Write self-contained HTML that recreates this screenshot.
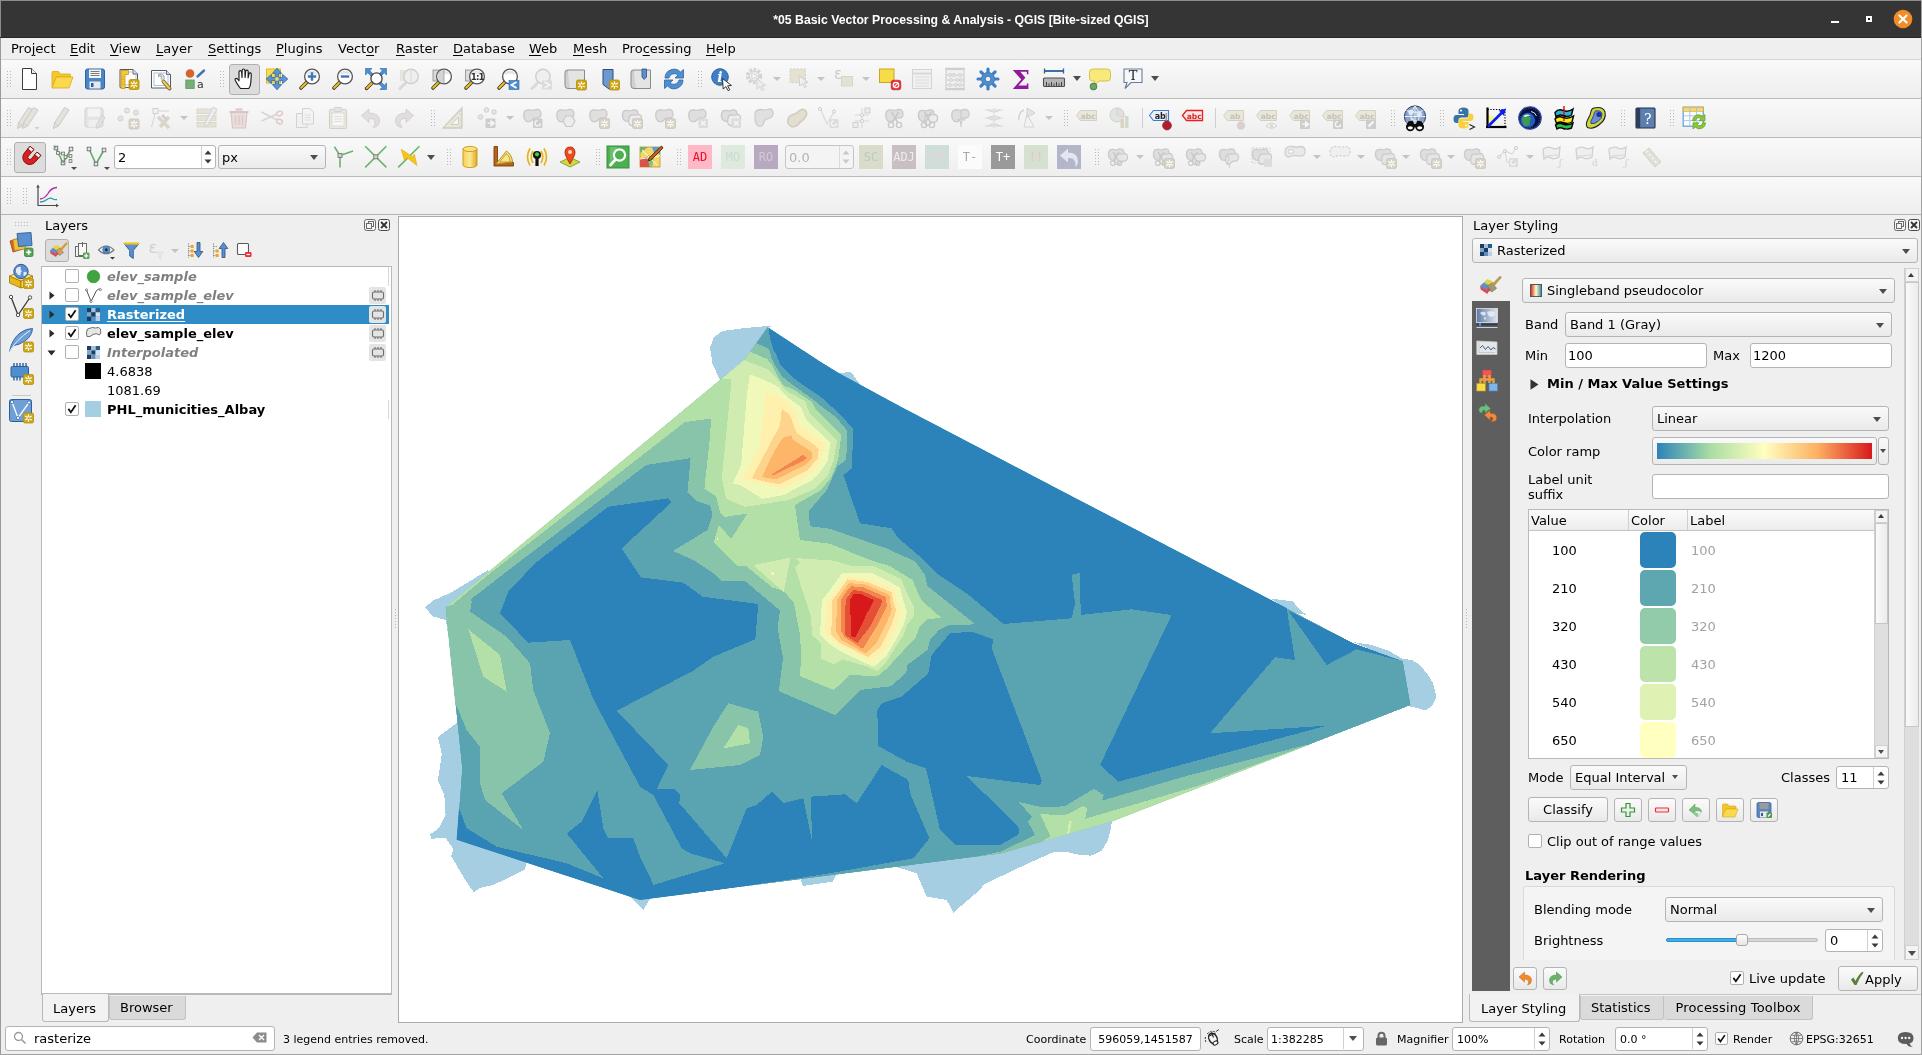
<!DOCTYPE html>
<html lang="en"><head><meta charset="utf-8"><title>QGIS</title><style>
*{box-sizing:border-box}
html,body{margin:0;padding:0}
body{width:1922px;height:1055px;overflow:hidden;background:#efefef;font-family:"DejaVu Sans","Liberation Sans",sans-serif;font-size:13px;color:#000;position:relative}
.a{position:absolute}
.t{position:absolute;white-space:nowrap;line-height:16px}
.tb{position:absolute;left:1px;width:1920px;background:linear-gradient(#f9f9f9,#eeeeee);border-bottom:1px solid #bababa}
.h{position:absolute;width:5px;background-image:radial-gradient(circle,#b8b8b8 0.7px,transparent 0.9px);background-size:3px 3px}
.in{position:absolute;background:#fff;border:1px solid #b4b4b4;border-radius:3px}
.cb{position:absolute;background:linear-gradient(#fafafa,#eaeaea);border:1px solid #b4b4b4;border-radius:3px}
.btn{position:absolute;background:linear-gradient(#fbfbfb,#e9e9e9);border:1px solid #b4b4b4;border-radius:3px}
.pressed{position:absolute;background:#dcdcdc;border:1px solid #b0b0b0;border-radius:3px}
.arr{position:absolute;width:0;height:0;border-left:4px solid transparent;border-right:4px solid transparent;border-top:5px solid #4d4d4d}
.arrd{position:absolute;width:0;height:0;border-left:4px solid transparent;border-right:4px solid transparent;border-top:4px solid #c4c4c4}
.up{position:absolute;width:0;height:0;border-left:4px solid transparent;border-right:4px solid transparent;border-bottom:5px solid #3a3a3a}
.chk{position:absolute;width:15px;height:15px;background:#fff;border:1px solid #b0b0b0;border-radius:2px}
svg{position:absolute;overflow:visible}
u{text-decoration-thickness:1px;text-underline-offset:2px}
</style></head><body><div id="root" style="position:absolute;left:0;top:0;width:1922px;height:1055px;will-change:transform">
<div class="a" style="left:0px;top:0px;width:1922px;height:38px;background:#353535;border-top:1px solid #8c8c8c;border-left:1px solid #8c8c8c"></div>
<div class="t" style="left:0px;top:11.5px;width:1922px;text-align:center;color:#fff;font-weight:bold;font-family:'Liberation Sans','DejaVu Sans',sans-serif;font-size:13.4px;transform:scaleX(0.915);transform-origin:961px 0">*05 Basic Vector Processing &amp; Analysis - QGIS [Bite-sized QGIS]</div>
<div class="a" style="left:1831px;top:20.6px;width:8.4px;height:2.5px;background:#fff"></div>
<div class="a" style="left:1865.6px;top:15.6px;width:6.8px;height:6.8px;border:2.4px solid #fff;background:#1a1a1a"></div>
<svg class="a" style="left:1893px;top:9px" width="20" height="20" viewBox="0 0 20 20"><circle cx="10" cy="10" r="9.3" fill="#f28c28"/><path d="M6.4 6.4 L13.6 13.6 M13.6 6.4 L6.4 13.6" stroke="#fff" stroke-width="2.1" stroke-linecap="round"/></svg>
<div class="a" style="left:0px;top:38px;width:1px;height:1017px;background:#9a9a9a"></div>
<div class="a" style="left:0px;top:37px;width:1922px;height:1px;background:#262626"></div>
<div class="a" style="left:1px;top:38px;width:1921px;height:22px;background:#efefef;border-bottom:1px solid #d6d6d6"></div>
<div class="t" style="left:11px;top:41px;font-size:13px">Pro<u>j</u>ect</div>
<div class="t" style="left:70px;top:41px;font-size:13px"><u>E</u>dit</div>
<div class="t" style="left:110px;top:41px;font-size:13px"><u>V</u>iew</div>
<div class="t" style="left:156px;top:41px;font-size:13px"><u>L</u>ayer</div>
<div class="t" style="left:208px;top:41px;font-size:13px"><u>S</u>ettings</div>
<div class="t" style="left:276px;top:41px;font-size:13px"><u>P</u>lugins</div>
<div class="t" style="left:338px;top:41px;font-size:13px">Vect<u>o</u>r</div>
<div class="t" style="left:396px;top:41px;font-size:13px"><u>R</u>aster</div>
<div class="t" style="left:453px;top:41px;font-size:13px"><u>D</u>atabase</div>
<div class="t" style="left:529px;top:41px;font-size:13px"><u>W</u>eb</div>
<div class="t" style="left:573px;top:41px;font-size:13px"><u>M</u>esh</div>
<div class="t" style="left:622px;top:41px;font-size:13px">Pro<u>c</u>essing</div>
<div class="t" style="left:706px;top:41px;font-size:13px"><u>H</u>elp</div>
<div class="tb" style="top:60px;height:39px"></div>
<div class="tb" style="top:99px;height:39px"></div>
<div class="tb" style="top:138px;height:39px"></div>
<div class="tb" style="top:177px;height:38px;border-bottom:1px solid #b4b4b4"></div>
<div class="h" style="left:6px;top:70px;height:17px"></div>
<svg style="left:17px;top:67px" width="24" height="24" viewBox="0 0 24 24" ><path d="M5.5 1.5 H14.5 L19.5 6.5 V22.5 H5.5 Z" fill="#fff" stroke="#3c3c3c" stroke-width="1"/><path d="M14.5 1.5 V6.5 H19.5" fill="#eee" stroke="#3c3c3c" stroke-width="1"/></svg>
<svg style="left:50px;top:67px" width="24" height="24" viewBox="0 0 24 24" ><path d="M2 20 V5.5 Q2 4.5 3 4.5 H8.5 L10.5 7 H19.5 Q20.5 7 20.5 8 V10 H6.5 L2.2 20.5 Z" fill="#f5c92a" stroke="#d9a91a" stroke-width=".8"/><path d="M6.3 10 H23 L19 21 H2 Z" fill="#fbd94f" stroke="#d9a91a" stroke-width=".8"/></svg>
<svg style="left:83px;top:67px" width="24" height="24" viewBox="0 0 24 24" ><rect x="2.5" y="2" width="19" height="20" rx="2" fill="#4a86c7" stroke="#2f62a0" stroke-width="1"/><rect x="6" y="2.5" width="12" height="8.5" fill="#f4f4f4"/><path d="M7.5 4.5 H16.5 M7.5 6.5 H16.5 M7.5 8.5 H16.5" stroke="#6d6d6d" stroke-width=".9"/><rect x="6.5" y="14.5" width="11" height="7" fill="#e9e9e9"/><rect x="8" y="16" width="2.5" height="4" fill="#2f5d94"/></svg>
<svg style="left:116px;top:67px" width="24" height="24" viewBox="0 0 24 24" ><path d="M4 2.5 H17 L21.5 7 V20.5 H4 Z" fill="#fff" stroke="#5a5a5a" stroke-width="1"/><path d="M17 2.5 V7 H21.5" fill="#eee" stroke="#5a5a5a"/><rect x="8" y="5" width="12" height="13" fill="none" stroke="#9db9e8" stroke-width=".8"/><path d="M5 3.5 H12.5 V7.5 H9 V21.5 H5 Z" fill="#f3c93b" stroke="#c8981a" stroke-width=".8"/><path d="M5.5 10 h2 M5.5 12.5 h2 M5.5 15 h2 M5.5 17.5 h2" stroke="#c8981a" stroke-width=".7"/><rect x="13" y="12.5" width="10" height="10" rx="1.6" fill="#cfa616" stroke="#b38f0a" stroke-width=".8"/><path d="M18 14.3 V20.7 M15.2 15.8 L20.8 19.2 M15.2 19.2 L20.8 15.8" stroke="#fff" stroke-width="1.3" stroke-linecap="round"/><circle cx="18" cy="17.5" r="1" fill="#cfa616"/></svg>
<svg style="left:149px;top:67px" width="24" height="24" viewBox="0 0 24 24" ><path d="M2.5 3.5 H17.5 L21.5 7.5 V21 H2.5 Z" fill="#fff" stroke="#5a5a5a" stroke-width="1"/><path d="M17.5 3.5 V7.5 H21.5" fill="#eee" stroke="#5a5a5a"/><rect x="5" y="6" width="14" height="12.5" fill="none" stroke="#9db9e8" stroke-width=".9"/><path d="M14.5 14.5 L20.5 21.5" stroke="#7a6a2a" stroke-width="4" stroke-linecap="round"/><path d="M14.5 14.5 L20.3 21.2" stroke="#e8c85a" stroke-width="2.4" stroke-linecap="round"/><path d="M9.5 7.5 Q13 6 15 9 Q16 12 14 13.5 L12 11.5 Q13 10 12 9 Q11 8.5 9.5 9.5 Z" fill="#e4e4e4" stroke="#8a8a8a" stroke-width=".8"/></svg>
<svg style="left:183px;top:67px" width="24" height="24" viewBox="0 0 24 24" ><circle cx="7" cy="6.5" r="4.3" fill="#d5622d"/><path d="M14.5 9.5 L21 3.5" stroke="#3f74b5" stroke-width="2.4" stroke-linecap="round"/><rect x="2.8" y="13" width="8.4" height="8.4" fill="#77b077" stroke="#5c985c" stroke-width=".8"/><text x="14" y="21.3" font-size="11" fill="#333" font-family="'DejaVu Sans','Liberation Sans',sans-serif">a</text></svg>
<div class="h" style="left:219px;top:70px;height:17px"></div>
<div class="pressed" style="left:229px;top:64px;width:31px;height:31px;"></div>
<svg style="left:232px;top:67px" width="24" height="24" viewBox="0 0 24 24" ><path d="M8.5 21.5 Q5 17 3.2 13.2 Q2.8 11.5 4.2 11.3 Q5.5 11.3 7 13.8 L7 5 Q7 3.6 8.2 3.6 Q9.4 3.6 9.6 5 L10 10.5 L10.2 3.3 Q10.3 2 11.5 2 Q12.8 2 12.9 3.3 L13.1 10.5 L13.7 4.2 Q13.9 3 15 3.1 Q16.2 3.3 16.2 4.6 L16.1 11 L17 6.8 Q17.3 5.7 18.3 5.9 Q19.4 6.2 19.3 7.5 L18.8 15.5 Q18.6 19 16.8 21.5 Z" fill="#fff" stroke="#1e1e1e" stroke-width="1.15" stroke-linejoin="round"/></svg>
<svg style="left:265.05px;top:67px" width="24" height="24" viewBox="0 0 24 24" ><rect x="1.5" y="2" width="14" height="14" fill="#f6dd4a" stroke="#d4b32a" stroke-width=".9"/><path d="M12 1.2 L16.6 6.4 H13.6 V10.4 H17.6 V7.4 L22.8 12 L17.6 16.6 V13.6 H13.6 V17.6 H16.6 L12 22.8 L7.4 17.6 H10.4 V13.6 H6.4 V16.6 L1.2 12 L6.4 7.4 V10.4 H10.4 V6.4 H7.4 Z" fill="#5b93d3" stroke="#2d65a5" stroke-width=".8"/><rect x="10.4" y="10.4" width="3.2" height="3.2" fill="#f6dd4a"/></svg>
<svg style="left:298.1px;top:67px" width="24" height="24" viewBox="0 0 24 24" ><path d="M9.3 14.7 L3 21" stroke="#3a3a3a" stroke-width="3.6" stroke-linecap="round"/><path d="M8.6 15.4 L3.2 20.8" stroke="#f3c418" stroke-width="2" stroke-linecap="round"/><circle cx="14" cy="9.5" r="7.4" fill="#fff" stroke="#555" stroke-width="1.3"/><path d="M8.3 8 A6 6 0 0 1 19.7 8 Q14 5 8.3 8 Z" fill="#e4e4e4"/><path d="M14 5.3 V13.7 M9.8 9.5 H18.2" stroke="#3f76b8" stroke-width="2.4"/></svg>
<svg style="left:331.15px;top:67px" width="24" height="24" viewBox="0 0 24 24" ><path d="M9.3 14.7 L3 21" stroke="#3a3a3a" stroke-width="3.6" stroke-linecap="round"/><path d="M8.6 15.4 L3.2 20.8" stroke="#f3c418" stroke-width="2" stroke-linecap="round"/><circle cx="14" cy="9.5" r="7.4" fill="#fff" stroke="#555" stroke-width="1.3"/><path d="M8.3 8 A6 6 0 0 1 19.7 8 Q14 5 8.3 8 Z" fill="#e4e4e4"/><path d="M9.8 9.5 H18.2" stroke="#3f76b8" stroke-width="2.4"/></svg>
<svg style="left:364.2px;top:67px" width="24" height="24" viewBox="0 0 24 24" ><path d="M1.5 1.5 H8 L5.8 3.7 L9 7 L7 9 L3.7 5.8 L1.5 8 Z M22.5 1.5 V8 L20.3 5.8 L17 9 L15 7 L18.2 3.7 L16 1.5 Z M22.5 22.5 H16 L18.2 20.3 L15 17 L17 15 L20.3 18.2 L22.5 16 Z" fill="#4f8fd0" stroke="#2d65a5" stroke-width=".6"/><path d="M8.5 15.5 L2.5 21.5" stroke="#3a3a3a" stroke-width="3.4" stroke-linecap="round"/><path d="M8 16 L2.8 21.2" stroke="#f3c418" stroke-width="1.9" stroke-linecap="round"/><circle cx="12.5" cy="11.5" r="5.6" fill="#fff" fill-opacity=".85" stroke="#4c4c4c" stroke-width="1.4"/></svg>
<svg style="left:397.25px;top:67px" width="24" height="24" viewBox="0 0 24 24" ><rect x="3" y="3" width="12" height="11" fill="#e6e4dc"/><path d="M9 15.5 L3 21.5" stroke="#d9d9d9" stroke-width="3" stroke-linecap="round"/><circle cx="14" cy="9.5" r="7.2" fill="#efefef" stroke="#cfcfcf" stroke-width="1.4"/><path d="M14 3 V16" stroke="#d8d8d8" stroke-width="1"/></svg>
<svg style="left:430.3px;top:67px" width="24" height="24" viewBox="0 0 24 24" ><rect x="3" y="3" width="12" height="11" fill="#d9d9d9" stroke="#8a8a8a" stroke-width=".8"/><path d="M9.3 14.7 L3 21" stroke="#3a3a3a" stroke-width="3.6" stroke-linecap="round"/><path d="M8.6 15.4 L3.2 20.8" stroke="#f3c418" stroke-width="2" stroke-linecap="round"/><circle cx="14" cy="9.5" r="7.4" fill="#fff" stroke="#555" stroke-width="1.3"/><path d="M8.3 8 A6 6 0 0 1 19.7 8 Q14 5 8.3 8 Z" fill="#e4e4e4"/><path d="M14 2.8 A6.7 6.7 0 0 0 14 16.2 Z" fill="#d4d4d4"/><path d="M14 2.8 V16.2" stroke="#9a9a9a" stroke-width=".8"/></svg>
<svg style="left:463.35px;top:67px" width="24" height="24" viewBox="0 0 24 24" ><rect x="2.5" y="3" width="12" height="11" fill="#dcdcdc" stroke="#8a8a8a" stroke-width=".8"/><path d="M9.3 14.7 L3 21" stroke="#3a3a3a" stroke-width="3.6" stroke-linecap="round"/><path d="M8.6 15.4 L3.2 20.8" stroke="#f3c418" stroke-width="2" stroke-linecap="round"/><circle cx="14" cy="9.5" r="7.4" fill="#fff" stroke="#555" stroke-width="1.3"/><path d="M8.3 8 A6 6 0 0 1 19.7 8 Q14 5 8.3 8 Z" fill="#e4e4e4"/><text x="14.2" y="13.2" font-size="8.8" font-weight="bold" text-anchor="middle" fill="#333" letter-spacing="-.9" font-family="'DejaVu Sans','Liberation Sans',sans-serif">1:1</text></svg>
<svg style="left:496.4px;top:67px" width="24" height="24" viewBox="0 0 24 24" ><path d="M9.3 14.7 L3 21" stroke="#3a3a3a" stroke-width="3.6" stroke-linecap="round"/><path d="M8.6 15.4 L3.2 20.8" stroke="#f3c418" stroke-width="2" stroke-linecap="round"/><circle cx="14" cy="9.5" r="7.4" fill="#fff" stroke="#555" stroke-width="1.3"/><path d="M8.3 8 A6 6 0 0 1 19.7 8 Q14 5 8.3 8 Z" fill="#e4e4e4"/><rect x="13" y="13.5" width="10" height="9" fill="#4f8fd0" stroke="#2d65a5" stroke-width=".6"/><path d="M20.5 15 L15.5 18 L20.5 21" fill="none" stroke="#fff" stroke-width="1.8"/></svg>
<svg style="left:529.45px;top:67px" width="24" height="24" viewBox="0 0 24 24" ><path d="M9 15.5 L3 21.5" stroke="#d9d9d9" stroke-width="3" stroke-linecap="round"/><circle cx="14" cy="9.5" r="7.2" fill="#efefef" stroke="#cfcfcf" stroke-width="1.4"/><rect x="13" y="13.5" width="10" height="9" fill="#dcdcdc"/><path d="M15.5 15 L20.5 18 L15.5 21" fill="none" stroke="#f4f4f4" stroke-width="1.8"/></svg>
<svg style="left:562.5px;top:67px" width="24" height="24" viewBox="0 0 24 24" ><path d="M4.5 3 H21.5 V21.5 H7 Q4.5 21.5 4.5 19 Z" fill="#e4e4e4" stroke="#8a8a8a" stroke-width="1"/><path d="M4.5 3 Q2 3 2 5.5 V18.5 Q2 21.5 5 21.5 H7" fill="#d0d0d0" stroke="#8a8a8a" stroke-width="1"/><rect x="13.5" y="13" width="10" height="10" rx="1.6" fill="#cfa616" stroke="#b38f0a" stroke-width=".8"/><path d="M18.5 14.8 V21.2 M15.7 16.3 L21.3 19.7 M15.7 19.7 L21.3 16.3" stroke="#fff" stroke-width="1.3" stroke-linecap="round"/><circle cx="18.5" cy="18" r="1" fill="#cfa616"/></svg>
<svg style="left:595.55px;top:67px" width="24" height="24" viewBox="0 0 24 24" ><path d="M7 2.5 H17 V22 H13 L7 17.5 Z" fill="#6a9ad0" stroke="#2d4f7a" stroke-width="1"/><rect x="13.5" y="13" width="10" height="10" rx="1.6" fill="#cfa616" stroke="#b38f0a" stroke-width=".8"/><path d="M18.5 14.8 V21.2 M15.7 16.3 L21.3 19.7 M15.7 19.7 L21.3 16.3" stroke="#fff" stroke-width="1.3" stroke-linecap="round"/><circle cx="18.5" cy="18" r="1" fill="#cfa616"/></svg>
<svg style="left:628.6px;top:67px" width="24" height="24" viewBox="0 0 24 24" ><path d="M4.5 3 H21.5 V21.5 H7 Q4.5 21.5 4.5 19 Z" fill="#e4e4e4" stroke="#8a8a8a" stroke-width="1"/><path d="M4.5 3 Q2 3 2 5.5 V18.5 Q2 21.5 5 21.5 H7" fill="#d0d0d0" stroke="#8a8a8a" stroke-width="1"/><path d="M13 2 H17.5 V10 L15.2 12.5 L13 10 Z" fill="#5b8fd0" stroke="#2d4f7a" stroke-width=".8"/></svg>
<svg style="left:661.65px;top:67px" width="24" height="24" viewBox="0 0 24 24" ><path d="M3 11 A9 9 0 0 1 18.5 5 L21.5 2.5 V11 H13 L16 8 A5.6 5.6 0 0 0 7 11 Z" fill="#4f8fd0" stroke="#2d65a5" stroke-width=".8"/><path d="M21 13 A9 9 0 0 1 5.5 19 L2.5 21.5 V13 H11 L8 16 A5.6 5.6 0 0 0 17 13 Z" fill="#4f8fd0" stroke="#2d65a5" stroke-width=".8"/></svg>
<div class="h" style="left:697px;top:70px;height:17px"></div>
<svg style="left:710px;top:67px" width="24" height="24" viewBox="0 0 24 24" ><circle cx="10" cy="10" r="8.3" fill="#3f7fc6" stroke="#2b62a3" stroke-width="1"/><text x="10" y="15" font-size="14" font-weight="bold" font-style="italic" text-anchor="middle" fill="#fff" font-family="'DejaVu Serif','Liberation Serif',serif">i</text><path d="M12.5 11.5 L21.5 18.5 L17.6 18.8 L19.8 22.8 L18 23.6 L15.9 19.6 L13.2 22 Z" fill="#fff" stroke="#222" stroke-width=".9" stroke-linejoin="round"/></svg>
<svg style="left:744px;top:67px" width="24" height="24" viewBox="0 0 24 24" ><circle cx="10" cy="9" r="6.5" fill="none" stroke="#d4d4d4" stroke-width="3.4" stroke-dasharray="2.6 1.6"/><circle cx="10" cy="9" r="5" fill="#ebebeb" stroke="#d0d0d0" stroke-width="1"/><path d="M8 6 L13 9 L8 12 Z" fill="#f8f8f8" stroke="#d0d0d0" stroke-width=".7"/><path d="M12.5 11.5 L21.5 18.5 L17.6 18.8 L19.8 22.8 L18 23.6 L15.9 19.6 L13.2 22 Z" fill="#ededed" stroke="#cfcfcf" stroke-width=".9"/></svg>
<div class="arrd" style="left:773px;top:77px"></div>
<svg style="left:788px;top:67px" width="24" height="24" viewBox="0 0 24 24" ><rect x="2" y="2" width="15.5" height="13.5" fill="#e6e2d2" stroke="#cfcfcf" stroke-width="1" stroke-dasharray="2 1.4"/><path d="M11 8.5 L20 15.5 L16.1 15.8 L18.3 19.8 L16.5 20.6 L14.4 16.6 L11.7 19 Z" fill="#f0f0f0" stroke="#cbcbcb" stroke-width=".9"/></svg>
<div class="arrd" style="left:817px;top:77px"></div>
<svg style="left:833px;top:67px" width="24" height="24" viewBox="0 0 24 24" ><text x="1" y="11.5" font-size="15" fill="#cdcdcd" font-family="'DejaVu Sans','Liberation Sans',sans-serif">ε</text><rect x="8.5" y="9.5" width="11" height="9.5" fill="#e6e2d2" stroke="#d3d3d3" stroke-width=".9"/></svg>
<div class="arrd" style="left:862px;top:77px"></div>
<svg style="left:878px;top:67px" width="24" height="24" viewBox="0 0 24 24" ><rect x="1.5" y="2" width="14.5" height="13.5" fill="#f6dc48" stroke="#c9a820" stroke-width="1"/><rect x="13.2" y="13.2" width="9.6" height="9.6" rx="2" fill="#e8303a" stroke="#c01420" stroke-width=".6"/><circle cx="18" cy="18" r="2.7" fill="none" stroke="#fff" stroke-width="1.2"/><path d="M16.2 19.8 L19.8 16.2" stroke="#fff" stroke-width="1.2"/></svg>
<svg style="left:910px;top:67px" width="24" height="24" viewBox="0 0 24 24" ><rect x="2.5" y="2.5" width="19" height="19" fill="#f1f1f1" stroke="#d4d4d4" stroke-width="1"/><path d="M2.5 6.5 H21.5" stroke="#d4d4d4" stroke-width="1.6"/><path d="M5 10 H19 M5 13 H19 M5 16 H19 M5 19 H19" stroke="#dcdcdc" stroke-width="1"/></svg>
<svg style="left:943px;top:67px" width="24" height="24" viewBox="0 0 24 24" ><rect x="3" y="2.5" width="18" height="19" fill="#f1f1f1" stroke="#cfcfcf" stroke-width="1.2"/><path d="M3 8 H21 M3 13 H21 M3 18 H21" stroke="#cfcfcf" stroke-width="1"/><path d="M2 1.5 H22 M2 22.5 H22" stroke="#cfcfcf" stroke-width="1.4"/><g fill="#e3e3e3" stroke="#cfcfcf" stroke-width=".7"><circle cx="7" cy="8" r="1.7"/><circle cx="11" cy="8" r="1.7"/><circle cx="17" cy="8" r="1.7"/><circle cx="8" cy="13" r="1.7"/><circle cx="14" cy="13" r="1.7"/><circle cx="18" cy="13" r="1.7"/><circle cx="7" cy="18" r="1.7"/><circle cx="13" cy="18" r="1.7"/><circle cx="17" cy="18" r="1.7"/></g></svg>
<svg style="left:976px;top:67px" width="24" height="24" viewBox="0 0 24 24" ><g transform="translate(12 12)"><g stroke="#3f7fc6" stroke-width="3.2" stroke-linecap="round"><path d="M0 -10 V10"/><path d="M0 -10 V10" transform="rotate(45)"/><path d="M0 -10 V10" transform="rotate(90)"/><path d="M0 -10 V10" transform="rotate(135)"/></g><circle r="6.6" fill="#4f8fd0" stroke="#3f7fc6" stroke-width="1"/><circle r="2.8" fill="#f2f2f2" stroke="#2d65a5" stroke-width=".8"/></g></svg>
<svg style="left:1009px;top:67px" width="24" height="24" viewBox="0 0 24 24" ><text x="12" y="21.5" font-size="26" text-anchor="middle" fill="#8f1a9b" font-weight="bold" font-family="'DejaVu Serif','Liberation Serif',serif">Σ</text></svg>
<svg style="left:1042px;top:67px" width="24" height="24" viewBox="0 0 24 24" ><path d="M2.5 4 H21.5" stroke="#2d5f9a" stroke-width="1.8"/><path d="M2.5 1.5 V6.5 M21.5 1.5 V6.5" stroke="#2d5f9a" stroke-width="1.3"/><rect x="1.5" y="11" width="21" height="8.5" rx="1" fill="#b5b5b5" stroke="#4e4e4e" stroke-width="1.1"/><path d="M4.5 15 v4 M7 16.5 v2.5 M9.5 15 v4 M12 16.5 v2.5 M14.5 15 v4 M17 16.5 v2.5 M19.5 15 v4" stroke="#333" stroke-width=".9"/></svg>
<div class="arr" style="left:1073px;top:76px"></div>
<svg style="left:1088px;top:67px" width="24" height="24" viewBox="0 0 24 24" ><path d="M4.5 2 H19 Q22.5 2 22.5 5.5 V10.5 Q22.5 14 19 14 H11 L6 19 L7 14 H4.5 Q1.5 14 1.5 10.5 V5.5 Q1.5 2 4.5 2 Z" fill="#f7ea7a" stroke="#d4c04a" stroke-width="1"/><circle cx="5.5" cy="19.5" r="3.4" fill="#6aa56a" stroke="#3f7d3f" stroke-width=".9"/></svg>
<svg style="left:1121px;top:67px" width="24" height="24" viewBox="0 0 24 24" ><path d="M3 2 H21 V15.5 H10 L4 21.5 L6 15.5 H3 Z" fill="#f4f7fb" stroke="#6b7d95" stroke-width="1.1"/><text x="12" y="13" font-size="13" text-anchor="middle" fill="#222" font-family="'DejaVu Serif','Liberation Serif',serif">T</text></svg>
<div class="arr" style="left:1151px;top:76px"></div>
<div class="h" style="left:6px;top:109px;height:17px"></div>
<svg style="left:17px;top:106px" width="24" height="24" viewBox="0 0 24 24" ><g transform="translate(-3 0)"><path d="M14.5 1.5 L19 4 L8.5 20 L3.5 22.5 L4.5 17 Z" fill="#e4e2da" stroke="#c9c9c9" stroke-width="1"/><path d="M4.5 17 L8.5 20" stroke="#c9c9c9" stroke-width=".8"/></g><g transform="translate(2 0)"><path d="M14.5 1.5 L19 4 L8.5 20 L3.5 22.5 L4.5 17 Z" fill="#e4e2da" stroke="#c9c9c9" stroke-width="1"/><path d="M4.5 17 L8.5 20" stroke="#c9c9c9" stroke-width=".8"/></g><path d="M17.5 21 h5 l-2.5 2.6 z" fill="#cfcfcf"/></svg>
<svg style="left:50px;top:106px" width="24" height="24" viewBox="0 0 24 24" ><g transform="translate(0 0)"><path d="M14.5 1.5 L19 4 L8.5 20 L3.5 22.5 L4.5 17 Z" fill="#e4e2da" stroke="#c9c9c9" stroke-width="1"/><path d="M4.5 17 L8.5 20" stroke="#c9c9c9" stroke-width=".8"/></g></svg>
<svg style="left:83px;top:106px" width="24" height="24" viewBox="0 0 24 24" ><rect x="2" y="2" width="18" height="19" rx="2" fill="#e4e4e4" stroke="#d0d0d0" stroke-width="1"/><rect x="5" y="2.5" width="12" height="8" fill="#f3f3f3"/><rect x="5.5" y="14" width="11" height="7" fill="#efefef"/><path d="M19 9.5 L22 11.5 L16 21 L13 22.5 L13.5 19 Z" fill="#e4e2da" stroke="#cfcfcf" stroke-width=".9"/></svg>
<svg style="left:116px;top:106px" width="24" height="24" viewBox="0 0 24 24" ><circle cx="4.5" cy="12.5" r="2.5" fill="#e5e5e5" stroke="#d0d0d0"/><circle cx="11" cy="4.5" r="2.5" fill="#e5e5e5" stroke="#d0d0d0"/><circle cx="20" cy="6.5" r="2.5" fill="#e5e5e5" stroke="#d0d0d0"/><rect x="13" y="13" width="10" height="10" rx="1.6" fill="#d6d2c6" stroke="#cbc7bb" stroke-width=".8"/><path d="M18 14.8 V21.2 M15.2 16.3 L20.8 19.7 M15.2 19.7 L20.8 16.3" stroke="#fff" stroke-width="1.3" stroke-linecap="round"/><circle cx="18" cy="18" r="1" fill="#d6d2c6"/></svg>
<svg style="left:149px;top:106px" width="24" height="24" viewBox="0 0 24 24" ><rect x="4" y="2.5" width="5" height="5" fill="#f2f2f2" stroke="#cfcfcf" stroke-width="1"/><path d="M9 5 H20 M6 8 L2.5 21" stroke="#d4d4d4" stroke-width="1"/><path d="M9 11 L20 22 M20 11 L11 21" stroke="#d9d6c9" stroke-width="3.4"/><path d="M13 9 L18 14" stroke="#d0d0d0" stroke-width="3"/></svg>
<div class="arrd" style="left:180px;top:116px"></div>
<svg style="left:195px;top:106px" width="24" height="24" viewBox="0 0 24 24" ><rect x="2" y="3" width="19" height="4.6" fill="#e6e3d6" stroke="#d6d3c6" stroke-width=".8"/><rect x="2" y="9.7" width="19" height="4.6" fill="#e6e3d6" stroke="#d6d3c6" stroke-width=".8"/><rect x="2" y="16.4" width="19" height="4.6" fill="#e6e3d6" stroke="#d6d3c6" stroke-width=".8"/><path d="M18 1 L22 3.3 L13 19 L9.5 21 L10 17 Z" fill="#ececec" stroke="#cfcfcf" stroke-width=".9"/></svg>
<svg style="left:227px;top:106px" width="24" height="24" viewBox="0 0 24 24" ><path d="M4 6.5 H20 L18.5 22 H5.5 Z" fill="#eddcdc" stroke="#d9c4c4" stroke-width="1.1"/><path d="M2.5 6 H21.5 M8.5 3.5 H15.5" stroke="#d9c4c4" stroke-width="1.8"/><path d="M8.5 9.5 V19 M12 9.5 V19 M15.5 9.5 V19" stroke="#dcc9c9" stroke-width="1.4"/></svg>
<svg style="left:260px;top:106px" width="24" height="24" viewBox="0 0 24 24" ><path d="M1.5 6 L17 14 M1.5 15 L17 8" stroke="#d6d6d6" stroke-width="1.7"/><ellipse cx="19.5" cy="7.5" rx="3" ry="2.2" fill="none" stroke="#e0caca" stroke-width="1.5" transform="rotate(-25 19.5 7.5)"/><ellipse cx="19.5" cy="15.5" rx="3" ry="2.2" fill="none" stroke="#e0caca" stroke-width="1.5" transform="rotate(25 19.5 15.5)"/></svg>
<svg style="left:293px;top:106px" width="24" height="24" viewBox="0 0 24 24" ><path d="M3.5 7.5 H11 L14 10.5 V21.5 H3.5 Z" fill="#f1f1f1" stroke="#d2d2d2" stroke-width="1"/><path d="M9.5 2.5 H17 L20.5 6 V18 H9.5 Z" fill="#f4f4f4" stroke="#d2d2d2" stroke-width="1"/><path d="M11.5 9 H18 M11.5 11.5 H18 M11.5 14 H18" stroke="#dadada" stroke-width=".9"/></svg>
<svg style="left:326px;top:106px" width="24" height="24" viewBox="0 0 24 24" ><rect x="3.5" y="3.5" width="17" height="19" rx="1.5" fill="#ebe8dc" stroke="#d4d1c4" stroke-width="1.1"/><rect x="8" y="1.5" width="8" height="4" rx="1" fill="#e2e2e2" stroke="#cfcfcf" stroke-width=".8"/><rect x="6" y="7" width="12" height="13" fill="#f7f7f7" stroke="#d6d6d6" stroke-width=".8"/><path d="M8 10.5 H16 M8 13 H16 M8 15.5 H16" stroke="#dadada" stroke-width=".9"/></svg>
<svg style="left:359px;top:106px" width="24" height="24" viewBox="0 0 24 24" ><path d="M2.5 9.5 L10 3 V7 Q20.5 7 20.5 15 Q20.5 20.5 14 21.5 Q16.5 19 16 16 Q15.5 12.5 10 12.5 V16.5 Z" fill="#e2dede" stroke="#d2cccc" stroke-width=".8"/></svg>
<svg style="left:392px;top:106px" width="24" height="24" viewBox="0 0 24 24" ><path d="M21.5 9.5 L14 3 V7 Q3.5 7 3.5 15 Q3.5 20.5 10 21.5 Q7.5 19 8 16 Q8.5 12.5 14 12.5 V16.5 Z" fill="#e2dede" stroke="#d2cccc" stroke-width=".8"/></svg>
<div class="h" style="left:430px;top:109px;height:17px"></div>
<svg style="left:441px;top:106px" width="24" height="24" viewBox="0 0 24 24" ><path d="M21 2 V22 H2 Z" fill="#e9e6dc" stroke="#cfccc0" stroke-width="1.3"/><path d="M17.5 11 V18.5 H10 Z" fill="#f6f6f6" stroke="#cfccc0" stroke-width="1"/><path d="M21 5 h-2.5 M21 8 h-2.5 M21 11 h-1.5 M21 14 h-2.5 M21 17 h-1.5 M21 20 h-2.5" stroke="#cfccc0" stroke-width=".8"/></svg>
<svg style="left:477px;top:106px" width="24" height="24" viewBox="0 0 24 24" ><circle cx="3.5" cy="11" r="2.3" fill="#e5e5e5" stroke="#d0d0d0"/><circle cx="9.5" cy="4" r="2.3" fill="#e5e5e5" stroke="#d0d0d0"/><circle cx="17" cy="6" r="2.3" fill="#e5e5e5" stroke="#d0d0d0"/><rect x="8.5" y="12.5" width="10" height="9.5" rx="1.3" fill="#cdcdcd"/><path d="M10.5 17.2 H14 V14.7 L17.3 17.2 L14 19.8 V17.2" fill="#f6f6f6" stroke="#f6f6f6" stroke-width="1.2"/></svg>
<div class="arrd" style="left:506px;top:116px"></div>
<svg style="left:521px;top:106px" width="24" height="24" viewBox="0 0 24 24" ><path d="M3 7 Q4 3 9 4 Q12 5 15 3.5 Q20 3 20 8 Q20 12 16 12 Q13 11.5 11 14 Q8 17 5 15 Q2 12 3 7 Z" fill="#dfdfdf" stroke="#c9c9c9" stroke-width="1.3"/><rect x="12" y="12.5" width="9.5" height="9.5" rx="1.3" fill="#cdcdcd"/><path d="M19.3 17.2 A2.6 2.6 0 1 1 16.7 14.6" fill="none" stroke="#f6f6f6" stroke-width="1.3"/></svg>
<svg style="left:554px;top:106px" width="24" height="24" viewBox="0 0 24 24" ><path d="M3 7 Q4 3 9 4 Q12 5 15 3.5 Q20 3 20 8 Q20 12 16 12 Q13 11.5 11 14 Q8 17 5 15 Q2 12 3 7 Z" fill="#dfdfdf" stroke="#c9c9c9" stroke-width="1.3"/><path d="M12 10 L18 10 L21 15 L18 20.5 L12 20.5 L9 15 Z" fill="#ececec" stroke="#c9c9c9" stroke-width="1.2"/></svg>
<svg style="left:587px;top:106px" width="24" height="24" viewBox="0 0 24 24" ><path d="M3 7 Q4 3 9 4 Q12 5 15 3.5 Q20 3 20 8 Q20 12 16 12 Q13 11.5 11 14 Q8 17 5 15 Q2 12 3 7 Z" fill="#dfdfdf" stroke="#c9c9c9" stroke-width="1.3"/><rect x="12.5" y="12.5" width="10" height="10" rx="1.6" fill="#d6d2c6" stroke="#cbc7bb" stroke-width=".8"/><path d="M17.5 14.3 V20.7 M14.7 15.8 L20.3 19.2 M14.7 19.2 L20.3 15.8" stroke="#fff" stroke-width="1.3" stroke-linecap="round"/><circle cx="17.5" cy="17.5" r="1" fill="#d6d2c6"/></svg>
<svg style="left:620px;top:106px" width="24" height="24" viewBox="0 0 24 24" ><path d="M2.5 8 Q3 3.5 8 4.5 Q11 5.5 13 4 Q18 3 18 8 Q18 11 15 11.5 Q12 11.5 10 14 Q7.5 16.5 4.5 14.5 Q2 12 2.5 8 Z" fill="#dfdfdf" stroke="#c9c9c9" stroke-width="1.3"/><path d="M9 12 Q9.5 8.5 13.5 9 Q16 9.5 18 8.5 Q22 8.5 21.5 13 Q21 16.5 17.5 16 Q15 16 13.5 18.5 Q11.5 20.5 9.5 18.5 Q8 16 9 12 Z" fill="#ededed" stroke="#c9c9c9" stroke-width="1.3"/><rect x="12.5" y="12.5" width="10" height="10" rx="1.6" fill="#d6d2c6" stroke="#cbc7bb" stroke-width=".8"/><path d="M17.5 14.3 V20.7 M14.7 15.8 L20.3 19.2 M14.7 19.2 L20.3 15.8" stroke="#fff" stroke-width="1.3" stroke-linecap="round"/><circle cx="17.5" cy="17.5" r="1" fill="#d6d2c6"/></svg>
<svg style="left:653px;top:106px" width="24" height="24" viewBox="0 0 24 24" ><path d="M3 7 Q4 3 9 4 Q12 5 15 3.5 Q20 3 20 8 Q20 12 16 12 Q13 11.5 11 14 Q8 17 5 15 Q2 12 3 7 Z" fill="#dfdfdf" stroke="#c9c9c9" stroke-width="1.3"/><rect x="12.5" y="12.5" width="10" height="10" rx="1.6" fill="#d6d2c6" stroke="#cbc7bb" stroke-width=".8"/><path d="M17.5 14.3 V20.7 M14.7 15.8 L20.3 19.2 M14.7 19.2 L20.3 15.8" stroke="#fff" stroke-width="1.3" stroke-linecap="round"/><circle cx="17.5" cy="17.5" r="1" fill="#d6d2c6"/></svg>
<svg style="left:686px;top:106px" width="24" height="24" viewBox="0 0 24 24" ><path d="M3 7 Q4 3 9 4 Q12 5 15 3.5 Q20 3 20 8 Q20 12 16 12 Q13 11.5 11 14 Q8 17 5 15 Q2 12 3 7 Z" fill="#dfdfdf" stroke="#c9c9c9" stroke-width="1.3"/><rect x="12.5" y="12.5" width="9.5" height="9.5" rx="1.3" fill="#dcdcdc"/><path d="M15 15 L19.5 19.5 M19.5 15 L15 19.5" stroke="#f6f6f6" stroke-width="1.5"/></svg>
<svg style="left:719px;top:106px" width="24" height="24" viewBox="0 0 24 24" ><path d="M2.5 8 Q3 3.5 8 4.5 Q11 5.5 13 4 Q18 3 18 8 Q18 11 15 11.5 Q12 11.5 10 14 Q7.5 16.5 4.5 14.5 Q2 12 2.5 8 Z" fill="#dfdfdf" stroke="#c9c9c9" stroke-width="1.3"/><path d="M9 12 Q9.5 8.5 13.5 9 Q16 9.5 18 8.5 Q22 8.5 21.5 13 Q21 16.5 17.5 16 Q15 16 13.5 18.5 Q11.5 20.5 9.5 18.5 Q8 16 9 12 Z" fill="#ededed" stroke="#c9c9c9" stroke-width="1.3"/><rect x="12.5" y="12.5" width="9.5" height="9.5" rx="1.3" fill="#dcdcdc"/><path d="M15 15 L19.5 19.5 M19.5 15 L15 19.5" stroke="#f6f6f6" stroke-width="1.5"/></svg>
<svg style="left:752px;top:106px" width="24" height="24" viewBox="0 0 24 24" ><path d="M3 8 Q3.5 3.5 9 3.5 Q13 4.5 17 3 Q21.5 3 21 8 Q20.5 12 16 12.5 Q12.5 13 11.5 17 Q10.5 21.5 6 20 Q2.5 17 3 8 Z" fill="#e0e0e0" stroke="#cdcdcd" stroke-width="1.3"/></svg>
<svg style="left:785px;top:106px" width="24" height="24" viewBox="0 0 24 24" ><path d="M3 17 Q1.5 11 8 8.5 Q12 7.5 14 5 Q18 1.5 21 5 Q23 9 19 13 Q15 16 12 19.5 Q6 23 3 17 Z" fill="#e2ded0" stroke="#cfccc0" stroke-width="1.6"/></svg>
<svg style="left:817px;top:106px" width="24" height="24" viewBox="0 0 24 24" ><path d="M3 2 L10 18 L17 6" fill="none" stroke="#d8d8d8" stroke-width="1.1"/><circle cx="3" cy="3" r="1.6" fill="#f4f4f4" stroke="#d0d0d0"/><circle cx="17" cy="5.5" r="1.6" fill="#f4f4f4" stroke="#d0d0d0"/><rect x="12.5" y="13" width="9" height="9" rx="1.3" fill="#dcdcdc"/><path d="M19.3 17.5 A2.4 2.4 0 1 1 17 15" fill="none" stroke="#f6f6f6" stroke-width="1.2"/></svg>
<svg style="left:850px;top:106px" width="24" height="24" viewBox="0 0 24 24" ><path d="M12 2 V22 M5 9 H19 M5 15 H19" stroke="#d8d8d8" stroke-width="1.1"/><rect x="15" y="2" width="5" height="5" fill="#ececec" stroke="#d0d0d0"/><rect x="3" y="16.5" width="5" height="5" fill="#ececec" stroke="#d0d0d0"/><circle cx="12" cy="9" r="1.6" fill="#f4f4f4" stroke="#d0d0d0"/><circle cx="12" cy="15" r="1.6" fill="#f4f4f4" stroke="#d0d0d0"/></svg>
<svg style="left:883px;top:106px" width="24" height="24" viewBox="0 0 24 24" ><path d="M3 7 Q4 3 9 4 Q12 5 15 3.5 Q20 3 20 8 Q20 12 16 12 Q13 11.5 11 14 Q8 17 5 15 Q2 12 3 7 Z" fill="#dfdfdf" stroke="#c9c9c9" stroke-width="1.3"/><circle cx="8" cy="19" r="2.6" fill="none" stroke="#c9c9c9" stroke-width="1.4"/><circle cx="16" cy="19" r="2.6" fill="none" stroke="#c9c9c9" stroke-width="1.4"/><path d="M9 17 L15.5 6 M15 17 L8.5 6" stroke="#c9c9c9" stroke-width="1.6"/></svg>
<svg style="left:916px;top:106px" width="24" height="24" viewBox="0 0 24 24" ><path d="M2.5 8 Q3 3.5 8 4.5 Q11 5.5 13 4 Q18 3 18 8 Q18 11 15 11.5 Q12 11.5 10 14 Q7.5 16.5 4.5 14.5 Q2 12 2.5 8 Z" fill="#dfdfdf" stroke="#c9c9c9" stroke-width="1.3"/><path d="M9 12 Q9.5 8.5 13.5 9 Q16 9.5 18 8.5 Q22 8.5 21.5 13 Q21 16.5 17.5 16 Q15 16 13.5 18.5 Q11.5 20.5 9.5 18.5 Q8 16 9 12 Z" fill="#ededed" stroke="#c9c9c9" stroke-width="1.3"/><circle cx="8" cy="19" r="2.6" fill="none" stroke="#c9c9c9" stroke-width="1.4"/><circle cx="16" cy="19" r="2.6" fill="none" stroke="#c9c9c9" stroke-width="1.4"/><path d="M9 17 L15.5 6 M15 17 L8.5 6" stroke="#c9c9c9" stroke-width="1.6"/></svg>
<svg style="left:949px;top:106px" width="24" height="24" viewBox="0 0 24 24" ><path d="M3 7 Q4 3 9 4 Q12 5 15 3.5 Q20 3 20 8 Q20 12 16 12 Q13 11.5 11 14 Q8 17 5 15 Q2 12 3 7 Z" fill="#dfdfdf" stroke="#c9c9c9" stroke-width="1.3"/><path d="M12 4 V12 M8 14 Q12 12 12 21 M16 14 Q12 12 12 21" fill="none" stroke="#c9c9c9" stroke-width="1.1"/></svg>
<svg style="left:982px;top:106px" width="24" height="24" viewBox="0 0 24 24" ><path d="M3 4 H21 M3 12 H21 M3 20 H21" stroke="#d4d4d4" stroke-width="1.1"/><path d="M6 4 Q12 8 18 4 M6 12 Q12 8 18 12 M6 12 Q12 16 18 12 M6 20 Q12 16 18 20" fill="none" stroke="#d4d4d4" stroke-width="1"/><path d="M12 2 V22" stroke="#dcdcdc" stroke-width="1"/></svg>
<svg style="left:1015px;top:106px" width="24" height="24" viewBox="0 0 24 24" ><path d="M9 21 L12 8 L19 21 Z" fill="#f3f3f3" stroke="#d4d4d4" stroke-width="1"/><path d="M12 2 L20 7 L12 11 Z" fill="#e4e4e4" stroke="#d0d0d0" stroke-width="1"/><path d="M4 14 A9 9 0 0 1 9 4" fill="none" stroke="#d0d0d0" stroke-width="1.4"/></svg>
<div class="arrd" style="left:1045px;top:116px"></div>
<div class="h" style="left:1063px;top:109px;height:17px"></div>
<svg style="left:1075px;top:107px" width="24" height="24" viewBox="0 0 24 24" ><path d="M1.5 8.5 L5.5 3.5 H21.5 V13.5 H5.5 Z" fill="#e9e6da" stroke="#d3d0c4" stroke-width="1"/><text x="13.2" y="11.6" font-size="7.6" font-weight="bold" text-anchor="middle" fill="#c4c1b6" font-family="'DejaVu Sans','Liberation Sans',sans-serif">abc</text></svg>
<svg style="left:1108px;top:106px" width="24" height="24" viewBox="0 0 24 24" ><circle cx="9" cy="9" r="7" fill="#dfe6df" stroke="#cfcfcf" stroke-width="1"/><path d="M9 9 L9 2 A7 7 0 0 1 15.5 11.5 Z" fill="#e6dcdc" stroke="#cfcfcf" stroke-width=".7"/><rect x="12.5" y="13" width="3.5" height="9" fill="#d9d3c4"/><rect x="17" y="10" width="3.5" height="12" fill="#cfd9cf"/></svg>
<div class="a" style="left:1142px;top:108px;width:1px;height:20px;background:#cfcfcf"></div>
<svg style="left:1148px;top:107px" width="24" height="24" viewBox="0 0 24 24" ><path d="M1.5 8.5 L5.5 3.5 H20.5 V13.5 H5.5 Z" fill="#e8f1fb" stroke="#3d7cc9" stroke-width="1.1"/><text x="12.2" y="11.6" font-size="8" font-weight="bold" text-anchor="middle" fill="#222" font-family="'DejaVu Sans','Liberation Sans',sans-serif">ab</text><path d="M18.3 6 V16" stroke="#9a9a9a" stroke-width="1.6"/><circle cx="19" cy="18.5" r="4.4" fill="#b01e2d" stroke="#8a1220" stroke-width=".7"/></svg>
<svg style="left:1181px;top:107px" width="24" height="24" viewBox="0 0 24 24" ><path d="M1.5 8.5 L5.5 3.5 H21.5 V13.5 H5.5 Z" fill="#fbe9e9" stroke="#e02222" stroke-width="1.3"/><text x="13.2" y="11.6" font-size="7.6" font-weight="bold" text-anchor="middle" fill="#e02222" font-family="'DejaVu Sans','Liberation Sans',sans-serif">abc</text></svg>
<div class="a" style="left:1215px;top:108px;width:1px;height:20px;background:#cfcfcf"></div>
<svg style="left:1222px;top:107px" width="24" height="24" viewBox="0 0 24 24" ><path d="M1.5 8.5 L5.5 3.5 H21.5 V13.5 H5.5 Z" fill="#e9e6da" stroke="#d3d0c4" stroke-width="1"/><text x="13.2" y="11.6" font-size="7.6" font-weight="bold" text-anchor="middle" fill="#c4c1b6" font-family="'DejaVu Sans','Liberation Sans',sans-serif">ab</text><circle cx="19" cy="18.5" r="4.2" fill="#dccfcf"/></svg>
<svg style="left:1255px;top:107px" width="24" height="24" viewBox="0 0 24 24" ><path d="M1.5 8.5 L5.5 3.5 H21.5 V13.5 H5.5 Z" fill="#e9e6da" stroke="#d3d0c4" stroke-width="1"/><text x="13.2" y="11.6" font-size="7.6" font-weight="bold" text-anchor="middle" fill="#c4c1b6" font-family="'DejaVu Sans','Liberation Sans',sans-serif">abc</text><path d="M11 19 Q16.5 13.5 22 19 Q16.5 23.5 11 19 Z" fill="#f5f5f5" stroke="#cfcfcf" stroke-width="1"/><circle cx="16.5" cy="19" r="1.8" fill="#d8d8d8"/></svg>
<svg style="left:1288px;top:107px" width="24" height="24" viewBox="0 0 24 24" ><path d="M1.5 8.5 L5.5 3.5 H21.5 V13.5 H5.5 Z" fill="#e9e6da" stroke="#d3d0c4" stroke-width="1"/><text x="13.2" y="11.6" font-size="7.6" font-weight="bold" text-anchor="middle" fill="#c4c1b6" font-family="'DejaVu Sans','Liberation Sans',sans-serif">abc</text><rect x="12" y="12.5" width="10" height="9.5" rx="1.3" fill="#cdcdcd"/><path d="M14 17.2 H17.5 V14.7 L20.8 17.2 L17.5 19.8 V17.2" fill="#f6f6f6" stroke="#f6f6f6" stroke-width="1.2"/></svg>
<svg style="left:1321px;top:107px" width="24" height="24" viewBox="0 0 24 24" ><path d="M1.5 8.5 L5.5 3.5 H21.5 V13.5 H5.5 Z" fill="#e9e6da" stroke="#d3d0c4" stroke-width="1"/><text x="13.2" y="11.6" font-size="7.6" font-weight="bold" text-anchor="middle" fill="#c4c1b6" font-family="'DejaVu Sans','Liberation Sans',sans-serif">abc</text><rect x="12" y="12.5" width="10" height="9.5" rx="1.3" fill="#cdcdcd"/><path d="M19.6 17.2 A2.6 2.6 0 1 1 17 14.6" fill="none" stroke="#f6f6f6" stroke-width="1.3"/></svg>
<svg style="left:1354px;top:107px" width="24" height="24" viewBox="0 0 24 24" ><path d="M1.5 8.5 L5.5 3.5 H21.5 V13.5 H5.5 Z" fill="#e9e6da" stroke="#d3d0c4" stroke-width="1"/><text x="13.2" y="11.6" font-size="7.6" font-weight="bold" text-anchor="middle" fill="#c4c1b6" font-family="'DejaVu Sans','Liberation Sans',sans-serif">abc</text><rect x="12" y="12.5" width="10" height="9.5" rx="1.3" fill="#cdcdcd"/><path d="M14.5 19.5 L19.5 14.5" stroke="#f6f6f6" stroke-width="2.2"/></svg>
<div class="h" style="left:1390px;top:109px;height:17px"></div>
<svg style="left:1403px;top:107px" width="24" height="24" viewBox="0 0 24 24" ><circle cx="12" cy="9.5" r="10.6" fill="#8aa3c8" stroke="#26385c" stroke-width="1"/><path d="M1.5 9.5 H22.5 M12 -1 V20 M3.5 3.5 Q12 7 20.5 3.5 M3.5 15.5 Q12 12 20.5 15.5 M12 -1 Q3.5 9.5 12 20 M12 -1 Q20.5 9.5 12 20" fill="none" stroke="#eef3fa" stroke-width=".9"/><path d="M5 4 Q8 1.5 11 4 L10 7.5 L6 8 Z M13.5 5 Q17.5 3 19.5 7 L17 10.5 L13.5 9 Z M8 11 L11 11.5 L10.5 14 L8 13.5 Z" fill="#dfe8f4"/><path d="M5 14.5 L9.5 13.5 L11 17 H13 L14.5 13.5 L19 14.5 L21 20 H3 Z" fill="#0c0c0c"/><circle cx="7.3" cy="20" r="4.3" fill="#0c0c0c"/><circle cx="16.7" cy="20" r="4.3" fill="#0c0c0c"/><ellipse cx="7.3" cy="20.8" rx="2.6" ry="1.6" fill="#fff"/><ellipse cx="16.7" cy="20.8" rx="2.6" ry="1.6" fill="#fff"/></svg>
<div class="h" style="left:1439px;top:109px;height:17px"></div>
<svg style="left:1452px;top:106px" width="24" height="24" viewBox="0 0 24 24" ><path d="M11.5 1.5 Q6.5 1.5 6.5 5 V8 H12 V9 H4.5 Q1.5 9 1.5 13 Q1.5 17 4.5 17 H6.5 V14 Q6.5 11.5 9.5 11.5 H14 Q16.5 11.5 16.5 9 V5 Q16.5 1.5 11.5 1.5 Z" fill="#3873a6"/><circle cx="9" cy="4.6" r="1.1" fill="#fff"/><path d="M11.5 22.5 Q16.5 22.5 16.5 19 V16 H11 V15 H18.5 Q21.5 15 21.5 11 Q21.5 7.5 18.5 7.5 H16.5 V10 Q16.5 12.5 13.5 12.5 H9 Q6.5 12.5 6.5 15 V19 Q6.5 22.5 11.5 22.5 Z" fill="#f8cf3e"/><circle cx="14" cy="19.5" r="1.1" fill="#fff"/><path d="M17.5 18.5 L22.5 21 L17.5 23.5" fill="none" stroke="#222" stroke-width="1.1"/></svg>
<svg style="left:1484px;top:106px" width="24" height="24" viewBox="0 0 24 24" ><path d="M3.5 9 L13 11.5 L3.5 21 Z" fill="#f7f48a"/><path d="M3.5 3.5 H21 V21" fill="none" stroke="#000" stroke-width="1.1" stroke-dasharray="1.3 1.5"/><path d="M3.5 1.5 V22" stroke="#000" stroke-width="2.2"/><path d="M2 21 H22.5" stroke="#000" stroke-width="2.2"/><path d="M4 20.5 L18.5 6" stroke="#0a1ef0" stroke-width="2.6"/><path d="M22 2.5 L14.8 4.6 L19.9 9.7 Z" fill="#0a1ef0"/></svg>
<svg style="left:1518px;top:106px" width="24" height="24" viewBox="0 0 24 24" ><circle cx="12" cy="12" r="11.2" fill="#0a0f3a" stroke="#3247a8" stroke-width="1.2"/><circle cx="12" cy="12" r="9.6" fill="none" stroke="#7f9fe0" stroke-width=".5" stroke-dasharray=".8 1.6"/><circle cx="9.8" cy="14.2" r="7.4" fill="#1f5cc0"/><path d="M4 12 Q6 8.5 10 8.5 Q11 11 13.5 12 Q11 14.5 12 18.5 Q9 21 6 19.5 Q3.5 16 4 12 Z" fill="#3f9a4f"/><path d="M5 10 Q9 7.5 13 9.5 Q10 9 7.5 11 Z" fill="#e6eef8"/><path d="M13 5.5 Q17 6 18.5 10" fill="none" stroke="#cfe0ff" stroke-width="1"/></svg>
<svg style="left:1552px;top:106px" width="24" height="24" viewBox="0 0 24 24" ><path d="M12 0 V24" stroke="#e01010" stroke-width="1.4"/><path d="M3 6.5 Q6.5 2.5 11 4.5 Q16 6.5 21 3 L19.5 9 Q15.5 11.5 11 9.5 Q7 8 4 11 Z" fill="#29b6d8" stroke="#000" stroke-width="1.4"/><path d="M3 13 Q6.5 9.5 11 11.5 Q16 13.5 21.5 10 L20 16 Q15.5 18.5 11 16.5 Q7 15 4.5 17.5 Z" fill="#f2ee16" stroke="#000" stroke-width="1.4"/><path d="M3.5 19 Q7 16 11 18 Q16 20 21 17 L19.5 22 Q15.5 24 11 22.3 Q7.5 21 5 23 Z" fill="#27c24a" stroke="#000" stroke-width="1.4"/><path d="M12 3 V9 M12 12 V15" stroke="#e01010" stroke-width="1.4"/></svg>
<svg style="left:1584px;top:106px" width="24" height="24" viewBox="0 0 24 24" ><path d="M10 2 Q19 0 21 6 Q22.5 13 16 18 Q9 24 3.5 21.5 Q1 19 4 13 Q6.5 9 7 5.5 Q7.5 2.5 10 2 Z" fill="#ccd63a" stroke="#222" stroke-width="1.1"/><path d="M11.5 5 Q17 4 18 8 Q18.5 12.5 14 15.5 Q9.5 18.5 7 17.5 Q6 15.5 8.5 12 Q10 9 10.2 7 Q10.5 5.3 11.5 5 Z" fill="#6f8bd2" stroke="#2a3c7a" stroke-width=".9"/><circle cx="15" cy="8.5" r="2.6" fill="#1a2fae"/></svg>
<div class="h" style="left:1620px;top:109px;height:17px"></div>
<svg style="left:1633px;top:106px" width="24" height="24" viewBox="0 0 24 24" ><rect x="3" y="2" width="19" height="20" rx="1" fill="#5d7fb0" stroke="#22314a" stroke-width="1.1"/><rect x="3" y="2" width="4.2" height="20" fill="#2c3e5a"/><text x="14.8" y="17.5" font-size="14" text-anchor="middle" fill="#fff" font-family="'DejaVu Serif','Liberation Serif',serif">?</text></svg>
<div class="h" style="left:1669px;top:109px;height:17px"></div>
<svg style="left:1682px;top:106px" width="24" height="24" viewBox="0 0 24 24" ><rect x="1.2" y="1.2" width="20" height="19" fill="#fff" stroke="#5a9bd8" stroke-width="1.2"/><rect x="1.2" y="1.2" width="20" height="4.2" fill="#f7d774" stroke="#e0a81a" stroke-width=".6"/><path d="M1.2 9.8 H21.2 M1.2 14.6 H21.2 M7.8 1.2 V20.2 M14.6 1.2 V20.2" stroke="#9cc3ea" stroke-width=".9"/><path d="M10.5 14.8 A6 6 0 0 1 20.8 10.6 L23 8.6 V14.8 H17 L18.9 12.7 A3.4 3.4 0 0 0 13.3 14.8 Z" fill="#8cc63c" stroke="#5c9f1c" stroke-width=".7"/><path d="M23.5 16.8 A6 6 0 0 1 13.2 21 L11 23 V16.8 H17 L15.1 18.9 A3.4 3.4 0 0 0 20.7 16.8 Z" fill="#8cc63c" stroke="#5c9f1c" stroke-width=".7"/></svg>
<div class="h" style="left:6px;top:148px;height:17px"></div>
<div class="pressed" style="left:14px;top:142px;width:32px;height:31px;"></div>
<svg style="left:19px;top:146px" width="22" height="22" viewBox="0 0 24 24" ><g transform="rotate(40 12 12)"><path d="M4.5 3 H10 V12.5 A2.2 2.2 0 0 0 14.4 12.5 V3 H19.9 V12.5 A7.7 7.7 0 0 1 4.5 12.5 Z" fill="#d61f1f" stroke="#8a0f0f" stroke-width="1"/><rect x="4.5" y="3" width="5.5" height="3.8" fill="#f4f4f4" stroke="#8a0f0f" stroke-width="1"/><rect x="14.4" y="3" width="5.5" height="3.8" fill="#f4f4f4" stroke="#8a0f0f" stroke-width="1"/></g></svg>
<svg style="left:52px;top:144px" width="24" height="24" viewBox="0 0 24 24" ><path d="M4 4 L11 19 L19 5" fill="none" stroke="#5fae5f" stroke-width="1.6"/><rect x="2.2" y="2.2" width="3.6" height="3.6" fill="#e6e6e6" stroke="#6e6e6e" stroke-width=".9"/><rect x="9.2" y="17.2" width="3.6" height="3.6" fill="#e6e6e6" stroke="#6e6e6e" stroke-width=".9"/><rect x="17.2" y="3.2" width="3.6" height="3.6" fill="#e6e6e6" stroke="#6e6e6e" stroke-width=".9"/><path d="M4 4 L2 1.5 M11 19 L13.5 13 L18 12 M13.5 13 L11 9.5 L6 9" fill="none" stroke="#5fae5f" stroke-width="1.2" stroke-dasharray="1.6 1.2"/><rect x="12.1" y="11.6" width="2.8" height="2.8" fill="#e6e6e6" stroke="#6e6e6e" stroke-width=".8"/><rect x="17.1" y="10.6" width="2.8" height="2.8" fill="#e6e6e6" stroke="#6e6e6e" stroke-width=".8"/><rect x="9.6" y="8.1" width="2.8" height="2.8" fill="#e6e6e6" stroke="#6e6e6e" stroke-width=".8"/><rect x="4.6" y="7.6" width="2.8" height="2.8" fill="#e6e6e6" stroke="#6e6e6e" stroke-width=".8"/><rect x="17.1" y="15.6" width="2.8" height="2.8" fill="#e6e6e6" stroke="#6e6e6e" stroke-width=".8"/></svg>
<div class="arr" style="left:71px;top:166.5px;border-left-width:3px;border-right-width:3px;border-top-width:3.5px"></div>
<svg style="left:85px;top:145px" width="24" height="24" viewBox="0 0 24 24" ><path d="M4 4 L11 19 L19 5" fill="none" stroke="#5fae5f" stroke-width="1.6"/><rect x="2.2" y="2.2" width="3.6" height="3.6" fill="#e6e6e6" stroke="#6e6e6e" stroke-width=".9"/><rect x="9.2" y="17.2" width="3.6" height="3.6" fill="#e6e6e6" stroke="#6e6e6e" stroke-width=".9"/><rect x="17.2" y="3.2" width="3.6" height="3.6" fill="#e6e6e6" stroke="#6e6e6e" stroke-width=".9"/></svg>
<div class="arr" style="left:104px;top:166.5px;border-left-width:3px;border-right-width:3px;border-top-width:3.5px"></div>
<div class="in" style="left:114px;top:145px;width:102px;height:24px;"></div>
<div class="t" style="left:118px;top:149.5px;">2</div>
<div class="a" style="left:201px;top:146px;width:1px;height:22px;background:#d0d0d0"></div>
<svg style="left:204px;top:149px" width="8" height="16" viewBox="0 0 8 16"><path d="M0.5 5.5 L4 1.5 L7.5 5.5 Z M0.5 10.5 L4 14.5 L7.5 10.5 Z" fill="#3a3a3a"/></svg>
<div class="cb" style="left:218px;top:145px;width:108px;height:24px;"></div>
<div class="t" style="left:222px;top:149.5px;">px</div>
<div class="arr" style="left:310px;top:155px"></div>
<svg style="left:331px;top:145px" width="24" height="24" viewBox="0 0 24 24" ><path d="M9 10.5 L3.4 1.8 M9 10.5 L22.1 6.1 M9 10.5 L9 22.4" stroke="#6ab56a" stroke-width="1.6"/><rect x="7" y="8.5" width="4" height="4" fill="#cfcfcf" stroke="#7a7a7a" stroke-width=".9"/></svg>
<svg style="left:364px;top:145px" width="24" height="24" viewBox="0 0 24 24" ><path d="M1.2 1.2 L22.4 22.4 M22.4 1.2 L1.2 22.4" stroke="#6ab56a" stroke-width="1.6"/><rect x="9.8" y="9.8" width="4" height="4" fill="#cfcfcf" stroke="#7a7a7a" stroke-width=".9"/></svg>
<svg style="left:397px;top:145px" width="24" height="24" viewBox="0 0 24 24" ><path d="M1.2 22.4 L22.4 1.2" stroke="#6ab56a" stroke-width="1.6"/><path d="M4.2 4.2 L15.5 11.7 L17.4 9.2 L19.9 20.5 L10.5 13 L7.4 14.9 Z" fill="#f7c41a" stroke="#e0a80a" stroke-width=".6"/></svg>
<div class="arr" style="left:427px;top:155px"></div>
<div class="h" style="left:446px;top:148px;height:17px"></div>
<svg style="left:458px;top:145px" width="24" height="24" viewBox="0 0 24 24" ><defs><linearGradient id="cy" x1="0" x2="1"><stop offset="0" stop-color="#f7d04a"/><stop offset=".5" stop-color="#fbe89a"/><stop offset="1" stop-color="#e0a81a"/></linearGradient></defs><path d="M5 4 V20 A7 2.6 0 0 0 19 20 V4 Z" fill="url(#cy)" stroke="#c9961a" stroke-width=".9"/><ellipse cx="12" cy="4" rx="7" ry="2.6" fill="#fbe27a" stroke="#c9961a" stroke-width=".9"/></svg>
<svg style="left:491px;top:145px" width="24" height="24" viewBox="0 0 24 24" ><path d="M3 1.5 H6.5 V17.5 H22.5 V21 H3 Z" fill="#b5651d" stroke="#7a3f0c" stroke-width=".9"/><path d="M5 19 L15.5 6 Q21 10 21.5 17 Z" fill="#f7e58a" stroke="#b5901a" stroke-width="1"/><path d="M8.5 17 L15.5 8.5 Q19 11.5 19.3 17 Z" fill="none" stroke="#b5901a" stroke-width=".8"/></svg>
<svg style="left:525px;top:145px" width="24" height="24" viewBox="0 0 24 24" ><path d="M8 6 Q4.5 12 8 18 M16 6 Q19.5 12 16 18" fill="none" stroke="#e8b21a" stroke-width="1.7"/><path d="M5 3.5 Q0 12 5 20.5 M19 3.5 Q24 12 19 20.5" fill="none" stroke="#e8b21a" stroke-width="1.7"/><path d="M12 11 V21" stroke="#111" stroke-width="3.2"/><circle cx="12" cy="10" r="4" fill="#111"/><circle cx="12" cy="9.3" r="2.1" fill="#3fd23f"/></svg>
<svg style="left:558px;top:145px" width="24" height="24" viewBox="0 0 24 24" ><path d="M2 17 L12 12.5 L22 17 L12 22 Z" fill="#c9d94a" stroke="#8a9a2a" stroke-width=".9"/><path d="M12 19 Q6.5 9.5 7 7 Q7.5 2 12 2 Q16.5 2 17 7 Q17.5 9.5 12 19 Z" fill="#ef4a1c" stroke="#b52a0a" stroke-width=".9"/><circle cx="12" cy="7" r="2" fill="#ffd9c9"/></svg>
<div class="h" style="left:595px;top:148px;height:17px"></div>
<svg style="left:606px;top:145px" width="24" height="24" viewBox="0 0 24 24" ><rect x="1" y="1" width="22" height="22" fill="#4caf50" stroke="#3a8f3e" stroke-width="1"/><path d="M4 2 L11 2 L4 22 Z" fill="#69c06c"/><circle cx="13.5" cy="10" r="5.6" fill="none" stroke="#fff" stroke-width="2.2"/><path d="M9.5 14.5 L4.5 20" stroke="#fff" stroke-width="2.8" stroke-linecap="round"/></svg>
<svg style="left:639px;top:145px" width="24" height="24" viewBox="0 0 24 24" ><rect x="1" y="2" width="20" height="20" fill="#f3d76a" stroke="#b8962a" stroke-width=".8"/><path d="M1 8 L9 2 H1 Z" fill="#6fb36f"/><path d="M1 22 V14 L8 12 L11 22 Z" fill="#d9534a"/><path d="M13 2 H21 V9 L15 8 Z" fill="#5b9bd5"/><path d="M9 10 L15 13 L13 22 H11 L8 12 Z" fill="#7fc47f"/><path d="M3 5 L18 20 M1 14 L21 11" stroke="#fff" stroke-width=".9"/><path d="M22.5 1 L24 3 L12 15 L9 16 L10 13 Z" fill="#c9601a" stroke="#4a2a0a" stroke-width=".9"/></svg>
<div class="h" style="left:676px;top:148px;height:17px"></div>
<svg style="left:688px;top:145px" width="24" height="24" viewBox="0 0 24 24" ><rect x="0" y="0" width="24" height="24" fill="#ffb9c6"/><text x="12" y="16.3" font-size="12" text-anchor="middle" fill="#e8112d" font-family="'DejaVu Sans Mono','Liberation Mono',monospace">AD</text></svg>
<svg style="left:721px;top:145px" width="24" height="24" viewBox="0 0 24 24" ><rect x="0" y="0" width="24" height="24" fill="#dfeadf"/><text x="12" y="16.3" font-size="12" text-anchor="middle" fill="#c9dcc9" font-family="'DejaVu Sans Mono','Liberation Mono',monospace">MO</text></svg>
<svg style="left:754px;top:145px" width="24" height="24" viewBox="0 0 24 24" ><rect x="0" y="0" width="24" height="24" fill="#b7a9bf"/><text x="12" y="16.3" font-size="12" text-anchor="middle" fill="#d4c9da" font-family="'DejaVu Sans Mono','Liberation Mono',monospace">RO</text></svg>
<div class="in" style="left:785px;top:145px;width:69px;height:24px;background:#f4f4f4;border-color:#c4c4c4"></div>
<div class="t" style="left:789px;top:149.5px;color:#b4b4b4">0.0</div>
<div class="a" style="left:839px;top:146px;width:1px;height:22px;background:#dcdcdc"></div>
<svg style="left:842px;top:149px" width="8" height="16" viewBox="0 0 8 16"><path d="M0.5 5.5 L4 1.5 L7.5 5.5 Z M0.5 10.5 L4 14.5 L7.5 10.5 Z" fill="#c8c8c8"/></svg>
<svg style="left:859px;top:145px" width="24" height="24" viewBox="0 0 24 24" ><rect x="0" y="0" width="24" height="24" fill="#d9dcc8"/><text x="12" y="16.3" font-size="12" text-anchor="middle" fill="#b5cbc8" font-family="'DejaVu Sans Mono','Liberation Mono',monospace">SC</text></svg>
<svg style="left:892px;top:145px" width="24" height="24" viewBox="0 0 24 24" ><rect x="0" y="0" width="24" height="24" fill="#c8bfc3"/><text x="12" y="16.3" font-size="12" text-anchor="middle" fill="#f0eaec" font-family="'DejaVu Sans Mono','Liberation Mono',monospace">ADJ</text></svg>
<svg style="left:925px;top:145px" width="24" height="24" viewBox="0 0 24 24" ><rect x="0" y="0" width="24" height="24" fill="#d0deda"/><text x="12" y="16.3" font-size="12" text-anchor="middle" fill="#e8d0d8" font-family="'DejaVu Sans Mono','Liberation Mono',monospace">2P</text></svg>
<svg style="left:958px;top:145px" width="24" height="24" viewBox="0 0 24 24" ><rect x="0" y="0" width="24" height="24" fill="#fbfbfb"/><text x="12" y="16.3" font-size="12" text-anchor="middle" fill="#a8a8a8" font-family="'DejaVu Sans Mono','Liberation Mono',monospace">T-</text></svg>
<svg style="left:991px;top:145px" width="24" height="24" viewBox="0 0 24 24" ><rect x="0" y="0" width="24" height="24" fill="#9a9a9a"/><text x="12" y="16.3" font-size="12" text-anchor="middle" fill="#ffffff" font-family="'DejaVu Sans Mono','Liberation Mono',monospace">T+</text></svg>
<svg style="left:1024px;top:145px" width="24" height="24" viewBox="0 0 24 24" ><rect x="0" y="0" width="24" height="24" fill="#d5e0d0"/><text x="12" y="16.3" font-size="12" text-anchor="middle" fill="#e8c4c4" font-family="'DejaVu Sans Mono','Liberation Mono',monospace">!!</text></svg>
<svg style="left:1057px;top:145px" width="24" height="24" viewBox="0 0 24 24" ><rect width="24" height="24" fill="#b3b5c9"/><path d="M3 10.5 L11 3.5 V7.5 Q21 7.5 21 16 Q21 20 18.5 22 Q19.5 12.5 11 13 V17.5 Z" fill="#e3e5ef"/></svg>
<div class="h" style="left:1094px;top:148px;height:17px"></div>
<svg style="left:1106px;top:145px" width="24" height="24" viewBox="0 0 24 24" ><path d="M2.5 8 Q3 3.5 8 4.5 Q11 5.5 13 4 Q18 3 18 8 Q18 11 15 11.5 Q12 11.5 10 14 Q7.5 16.5 4.5 14.5 Q2 12 2.5 8 Z" fill="#dedede" stroke="#cccccc" stroke-width="1.3"/><path d="M9 12 Q9.5 8.5 13.5 9 Q16 9.5 18 8.5 Q22 8.5 21.5 13 Q21 16.5 17.5 16 Q15 16 13.5 18.5 Q11.5 20.5 9.5 18.5 Q8 16 9 12 Z" fill="#e6e6e6" stroke="#cccccc" stroke-width="1.3"/><g transform="translate(0 2) scale(.85)"><circle cx="8" cy="19" r="2.6" fill="none" stroke="#c9c9c9" stroke-width="1.4"/><circle cx="16" cy="19" r="2.6" fill="none" stroke="#c9c9c9" stroke-width="1.4"/><path d="M9 17 L15.5 6 M15 17 L8.5 6" stroke="#c9c9c9" stroke-width="1.6"/></g></svg>
<div class="arrd" style="left:1136px;top:155px"></div>
<svg style="left:1151px;top:145px" width="24" height="24" viewBox="0 0 24 24" ><path d="M2.5 8 Q3 3.5 8 4.5 Q11 5.5 13 4 Q18 3 18 8 Q18 11 15 11.5 Q12 11.5 10 14 Q7.5 16.5 4.5 14.5 Q2 12 2.5 8 Z" fill="#dedede" stroke="#cccccc" stroke-width="1.3"/><path d="M9 12 Q9.5 8.5 13.5 9 Q16 9.5 18 8.5 Q22 8.5 21.5 13 Q21 16.5 17.5 16 Q15 16 13.5 18.5 Q11.5 20.5 9.5 18.5 Q8 16 9 12 Z" fill="#e6e6e6" stroke="#cccccc" stroke-width="1.3"/><g transform="translate(0 2) scale(.85)"><circle cx="8" cy="19" r="2.6" fill="none" stroke="#c9c9c9" stroke-width="1.4"/><circle cx="16" cy="19" r="2.6" fill="none" stroke="#c9c9c9" stroke-width="1.4"/><path d="M9 17 L15.5 6 M15 17 L8.5 6" stroke="#c9c9c9" stroke-width="1.6"/></g><rect x="13.5" y="13.5" width="10" height="10" rx="1.6" fill="#d6d2c6" stroke="#cbc7bb" stroke-width=".8"/><path d="M18.5 15.3 V21.7 M15.7 16.8 L21.3 20.2 M15.7 20.2 L21.3 16.8" stroke="#fff" stroke-width="1.3" stroke-linecap="round"/><circle cx="18.5" cy="18.5" r="1" fill="#d6d2c6"/></svg>
<svg style="left:1184px;top:145px" width="24" height="24" viewBox="0 0 24 24" ><path d="M2.5 8 Q3 3.5 8 4.5 Q11 5.5 13 4 Q18 3 18 8 Q18 11 15 11.5 Q12 11.5 10 14 Q7.5 16.5 4.5 14.5 Q2 12 2.5 8 Z" fill="#dedede" stroke="#cccccc" stroke-width="1.3"/><path d="M9 12 Q9.5 8.5 13.5 9 Q16 9.5 18 8.5 Q22 8.5 21.5 13 Q21 16.5 17.5 16 Q15 16 13.5 18.5 Q11.5 20.5 9.5 18.5 Q8 16 9 12 Z" fill="#e6e6e6" stroke="#cccccc" stroke-width="1.3"/><g transform="translate(0 2) scale(.85)"><circle cx="8" cy="19" r="2.6" fill="none" stroke="#c9c9c9" stroke-width="1.4"/><circle cx="16" cy="19" r="2.6" fill="none" stroke="#c9c9c9" stroke-width="1.4"/><path d="M9 17 L15.5 6 M15 17 L8.5 6" stroke="#c9c9c9" stroke-width="1.6"/></g></svg>
<svg style="left:1217px;top:145px" width="24" height="24" viewBox="0 0 24 24" ><path d="M2.5 8 Q3 3.5 8 4.5 Q11 5.5 13 4 Q18 3 18 8 Q18 11 15 11.5 Q12 11.5 10 14 Q7.5 16.5 4.5 14.5 Q2 12 2.5 8 Z" fill="#dedede" stroke="#cccccc" stroke-width="1.3"/><path d="M9 12 Q9.5 8.5 13.5 9 Q16 9.5 18 8.5 Q22 8.5 21.5 13 Q21 16.5 17.5 16 Q15 16 13.5 18.5 Q11.5 20.5 9.5 18.5 Q8 16 9 12 Z" fill="#e6e6e6" stroke="#cccccc" stroke-width="1.3"/><path d="M10 10 Q14 14 10 18 Q14 20 12 23" fill="none" stroke="#d0d0d0" stroke-width="1.1"/></svg>
<svg style="left:1250px;top:145px" width="24" height="24" viewBox="0 0 24 24" ><rect x="2" y="3" width="18" height="15" fill="none" stroke="#d0d0d0" stroke-dasharray="2 1.4"/><path d="M2.5 8 Q3 3.5 8 4.5 Q11 5.5 13 4 Q18 3 18 8 Q18 11 15 11.5 Q12 11.5 10 14 Q7.5 16.5 4.5 14.5 Q2 12 2.5 8 Z" fill="#dedede" stroke="#cccccc" stroke-width="1.3"/><path d="M9 12 Q9.5 8.5 13.5 9 Q16 9.5 18 8.5 Q22 8.5 21.5 13 Q21 16.5 17.5 16 Q15 16 13.5 18.5 Q11.5 20.5 9.5 18.5 Q8 16 9 12 Z" fill="#e6e6e6" stroke="#cccccc" stroke-width="1.3"/><rect x="14" y="14" width="8" height="8" rx="1" fill="#dcdcdc"/></svg>
<svg style="left:1283px;top:142px" width="24" height="24" viewBox="0 0 24 24" ><path d="M2 10 Q2 4 9 4.5 Q14 5.5 18 4.5 Q22.5 5 22 10 Q21.5 14.5 17 14 Q10 13 6 15 Q2 15 2 10 Z" fill="#e9e9e9" stroke="#d0d0d0" stroke-width="1.3"/><ellipse cx="8" cy="9.5" rx="3" ry="2" fill="#f6f6f6" stroke="#d0d0d0" stroke-width="1"/></svg>
<div class="arrd" style="left:1313px;top:155px"></div>
<svg style="left:1328px;top:142px" width="24" height="24" viewBox="0 0 24 24" ><path d="M2 10 Q2 4 9 4.5 Q14 5.5 18 4.5 Q22.5 5 22 10 Q21.5 14.5 17 14 Q10 13 6 15 Q2 15 2 10 Z" fill="#efefef" stroke="#d0d0d0" stroke-width="1.2" stroke-dasharray="2.2 1.5"/></svg>
<div class="arrd" style="left:1357px;top:155px"></div>
<svg style="left:1373px;top:145px" width="24" height="24" viewBox="0 0 24 24" ><path d="M2.5 8 Q3 3.5 8 4.5 Q11 5.5 13 4 Q18 3 18 8 Q18 11 15 11.5 Q12 11.5 10 14 Q7.5 16.5 4.5 14.5 Q2 12 2.5 8 Z" fill="#dedede" stroke="#cccccc" stroke-width="1.3"/><path d="M9 12 Q9.5 8.5 13.5 9 Q16 9.5 18 8.5 Q22 8.5 21.5 13 Q21 16.5 17.5 16 Q15 16 13.5 18.5 Q11.5 20.5 9.5 18.5 Q8 16 9 12 Z" fill="#e6e6e6" stroke="#cccccc" stroke-width="1.3"/><rect x="13.5" y="13.5" width="10" height="10" rx="1.6" fill="#d6d2c6" stroke="#cbc7bb" stroke-width=".8"/><path d="M18.5 15.3 V21.7 M15.7 16.8 L21.3 20.2 M15.7 20.2 L21.3 16.8" stroke="#fff" stroke-width="1.3" stroke-linecap="round"/><circle cx="18.5" cy="18.5" r="1" fill="#d6d2c6"/></svg>
<div class="arrd" style="left:1402px;top:155px"></div>
<svg style="left:1418px;top:145px" width="24" height="24" viewBox="0 0 24 24" ><path d="M2.5 8 Q3 3.5 8 4.5 Q11 5.5 13 4 Q18 3 18 8 Q18 11 15 11.5 Q12 11.5 10 14 Q7.5 16.5 4.5 14.5 Q2 12 2.5 8 Z" fill="#dedede" stroke="#cccccc" stroke-width="1.3"/><path d="M9 12 Q9.5 8.5 13.5 9 Q16 9.5 18 8.5 Q22 8.5 21.5 13 Q21 16.5 17.5 16 Q15 16 13.5 18.5 Q11.5 20.5 9.5 18.5 Q8 16 9 12 Z" fill="#e6e6e6" stroke="#cccccc" stroke-width="1.3"/><rect x="13.5" y="13.5" width="10" height="10" rx="1.6" fill="#d6d2c6" stroke="#cbc7bb" stroke-width=".8"/><path d="M18.5 15.3 V21.7 M15.7 16.8 L21.3 20.2 M15.7 20.2 L21.3 16.8" stroke="#fff" stroke-width="1.3" stroke-linecap="round"/><circle cx="18.5" cy="18.5" r="1" fill="#d6d2c6"/></svg>
<div class="arrd" style="left:1447px;top:155px"></div>
<svg style="left:1462px;top:145px" width="24" height="24" viewBox="0 0 24 24" ><path d="M2.5 8 Q3 3.5 8 4.5 Q11 5.5 13 4 Q18 3 18 8 Q18 11 15 11.5 Q12 11.5 10 14 Q7.5 16.5 4.5 14.5 Q2 12 2.5 8 Z" fill="#dedede" stroke="#cccccc" stroke-width="1.3"/><path d="M9 12 Q9.5 8.5 13.5 9 Q16 9.5 18 8.5 Q22 8.5 21.5 13 Q21 16.5 17.5 16 Q15 16 13.5 18.5 Q11.5 20.5 9.5 18.5 Q8 16 9 12 Z" fill="#e6e6e6" stroke="#cccccc" stroke-width="1.3"/><rect x="13.5" y="13.5" width="10" height="10" rx="1.6" fill="#d6d2c6" stroke="#cbc7bb" stroke-width=".8"/><path d="M18.5 15.3 V21.7 M15.7 16.8 L21.3 20.2 M15.7 20.2 L21.3 16.8" stroke="#fff" stroke-width="1.3" stroke-linecap="round"/><circle cx="18.5" cy="18.5" r="1" fill="#d6d2c6"/></svg>
<svg style="left:1496px;top:145px" width="24" height="24" viewBox="0 0 24 24" ><path d="M3 12 L9 6 L16 9 L20 3 M9 6 L11 17 L18 20" fill="none" stroke="#d8d8d8" stroke-width="1.1"/><circle cx="3" cy="12" r="1.6" fill="#eee" stroke="#d0d0d0"/><circle cx="9" cy="6" r="1.6" fill="#eee" stroke="#d0d0d0"/><circle cx="20" cy="3" r="1.6" fill="#eee" stroke="#d0d0d0"/><rect x="13" y="13" width="9" height="9" rx="1.3" fill="#dcdcdc"/><path d="M19.6 17.5 A2.4 2.4 0 1 1 17.3 15" fill="none" stroke="#f6f6f6" stroke-width="1.2"/></svg>
<div class="arrd" style="left:1526px;top:155px"></div>
<svg style="left:1540px;top:143px" width="24" height="24" viewBox="0 0 24 24" ><path d="M3 6 Q8 3 12 5 Q16 7 20 4 L19 14 Q14 17 11 15 Q7 13 4 16 Z" fill="#efefef" stroke="#d0d0d0" stroke-width="1.3"/><path d="M5 13 L18 12" stroke="#d8d8d8" stroke-width="1"/><text x="19" y="23" font-size="9" fill="#cfcfcf" font-style="italic" font-family="'DejaVu Serif','Liberation Serif',serif">ʃ</text></svg>
<svg style="left:1573px;top:143px" width="24" height="24" viewBox="0 0 24 24" ><path d="M3 6 Q8 3 12 5 Q16 7 20 4 L19 14 Q14 17 11 15 Q7 13 4 16 Z" fill="#efefef" stroke="#d0d0d0" stroke-width="1.3"/><path d="M5 13 L18 12" stroke="#d8d8d8" stroke-width="1"/><text x="19" y="23" font-size="9" fill="#cfcfcf" font-family="'DejaVu Serif','Liberation Serif',serif">d</text></svg>
<svg style="left:1606px;top:143px" width="24" height="24" viewBox="0 0 24 24" ><path d="M3 6 Q8 3 12 5 Q16 7 20 4 L19 14 Q14 17 11 15 Q7 13 4 16 Z" fill="#efefef" stroke="#d0d0d0" stroke-width="1.3"/><path d="M5 13 L18 12" stroke="#d8d8d8" stroke-width="1"/><text x="19" y="23" font-size="9" fill="#cfcfcf" font-style="italic" font-family="'DejaVu Serif','Liberation Serif',serif">ʃ</text></svg>
<svg style="left:1639px;top:145px" width="24" height="24" viewBox="0 0 24 24" ><path d="M4 8 L10 3 L22 17 L16 22 Z" fill="#e1e0d6" stroke="#d2d0c4" stroke-width="1"/><path d="M7 5.5 L19 19.5" stroke="#f4f4f4" stroke-width="1.6" stroke-dasharray="2.5 2"/></svg>
<div class="h" style="left:6px;top:187px;height:17px"></div>
<div class="h" style="left:22px;top:187px;height:17px"></div>
<svg style="left:35px;top:184px" width="24" height="24" viewBox="0 0 24 24" ><path d="M3 2 V21.5 H23" fill="none" stroke="#4a4a4a" stroke-width="1.2"/><path d="M3 .5 L1.2 3.5 H4.8 Z M24 21.5 L21 19.7 V23.3 Z" fill="#4a4a4a"/><path d="M5 15 Q10 14.5 13 9.5 Q16 4 22 3.5" fill="none" stroke="#b32ea8" stroke-width="1.4"/><path d="M5 18 Q9 18 12 15.5 Q15 13 18 15 Q20 16 22 15.5" fill="none" stroke="#2a9aa8" stroke-width="1.3"/></svg>
<div class="h" style="left:14px;top:220.5px;width:15px;height:5px;"></div>
<svg style="left:8px;top:231px" width="26" height="26" viewBox="0 0 26 26" ><path d="M2 10 L12 7 L15 18 L5 21 Z" fill="#d9622a" stroke="#a3421a" stroke-width=".8"/><path d="M5 8.5 L16 7 L17.5 18 L6.5 19.5 Z" fill="#f0c23a" stroke="#b98a1a" stroke-width=".8"/><path d="M9 2.5 L23 1.5 L24 14.5 L10.5 15.5 Z" fill="#5b8fd0" stroke="#2d5f9a" stroke-width=".9"/><rect x="16.5" y="17" width="8.5" height="8.5" rx="1.5" fill="#58a558" stroke="#3d7f3d" stroke-width=".8"/><path d="M20.7 18.8 V23.7 M18.3 21.2 H23.2" stroke="#fff" stroke-width="1.6"/></svg>
<svg style="left:8px;top:263px" width="26" height="26" viewBox="0 0 26 26" ><path d="M1.5 13 L13 18 V25 L1.5 20 Z" fill="#e8b81a" stroke="#9a7408" stroke-width=".8"/><path d="M13 18 L24.5 13 V20 L13 25 Z" fill="#f7dc5a" stroke="#9a7408" stroke-width=".8"/><path d="M1.5 13 L13 8.5 L24.5 13 L13 18 Z" fill="#fbe88a" stroke="#9a7408" stroke-width=".8"/><circle cx="13" cy="8.5" r="7.2" fill="#5b8fd0" stroke="#2d4f8a" stroke-width=".9"/><path d="M8 6 Q10 3 13 4 Q12 7 14 8 Q12 10 12.5 12.5 Q9 12 8 9 Z M15.5 9 Q18 8 19 10 Q18 13 15.5 13 Z" fill="#e3ecf7"/><rect x="15.5" y="15.5" width="10" height="10" rx="1.6" fill="#cfa616" stroke="#b38f0a" stroke-width=".8"/><path d="M20.5 17.3 V23.7 M17.7 18.8 L23.3 22.2 M17.7 22.2 L23.3 18.8" stroke="#fff" stroke-width="1.3" stroke-linecap="round"/><circle cx="20.5" cy="20.5" r="1" fill="#cfa616"/></svg>
<svg style="left:8px;top:294px" width="26" height="26" viewBox="0 0 26 26" ><path d="M3 3 L10 21 L22 3.5" fill="none" stroke="#3c3c3c" stroke-width="1.3"/><circle cx="3" cy="3" r="1.7" fill="#fff" stroke="#3c3c3c" stroke-width=".9"/><circle cx="10" cy="21" r="1.7" fill="#fff" stroke="#3c3c3c" stroke-width=".9"/><circle cx="22" cy="3.5" r="1.7" fill="#fff" stroke="#3c3c3c" stroke-width=".9"/><rect x="15.5" y="14.5" width="10" height="10" rx="1.6" fill="#cfa616" stroke="#b38f0a" stroke-width=".8"/><path d="M20.5 16.3 V22.7 M17.7 17.8 L23.3 21.2 M17.7 21.2 L23.3 17.8" stroke="#fff" stroke-width="1.3" stroke-linecap="round"/><circle cx="20.5" cy="19.5" r="1" fill="#cfa616"/></svg>
<svg style="left:8px;top:327px" width="26" height="26" viewBox="0 0 26 26" ><path d="M1.5 24.5 Q4 12 12 6 Q18 1.5 24.5 1.5 Q24 9 17 14 Q11 18 5.5 18.5 Z" fill="#6e9fd6" stroke="#2d5f9a" stroke-width=".9"/><path d="M1.5 24.5 Q8 13 22 3.5" fill="none" stroke="#e9f0fa" stroke-width="1"/><rect x="15.5" y="15" width="10" height="10" rx="1.6" fill="#cfa616" stroke="#b38f0a" stroke-width=".8"/><path d="M20.5 16.8 V23.2 M17.7 18.3 L23.3 21.7 M17.7 21.7 L23.3 18.3" stroke="#fff" stroke-width="1.3" stroke-linecap="round"/><circle cx="20.5" cy="20" r="1" fill="#cfa616"/></svg>
<svg style="left:8px;top:360px" width="26" height="26" viewBox="0 0 26 26" ><rect x="3" y="6.5" width="17.5" height="10.5" rx="1.2" fill="#4f8fd0" stroke="#2d5f9a" stroke-width="1"/><path d="M6 3 V6.5 M9 3 V6.5 M12 3 V6.5 M15 3 V6.5 M18 3 V6.5 M6 17 V20.5 M9 17 V20.5 M12 17 V20.5" stroke="#2d5f9a" stroke-width="1.4"/><rect x="15.5" y="14.5" width="10" height="10" rx="1.6" fill="#cfa616" stroke="#b38f0a" stroke-width=".8"/><path d="M20.5 16.3 V22.7 M17.7 17.8 L23.3 21.2 M17.7 21.2 L23.3 17.8" stroke="#fff" stroke-width="1.3" stroke-linecap="round"/><circle cx="20.5" cy="19.5" r="1" fill="#cfa616"/></svg>
<div class="a" style="left:12px;top:395px;width:19px;height:1px;background:#c9c9c9"></div>
<svg style="left:8px;top:398px" width="26" height="26" viewBox="0 0 26 26" ><rect x="1.5" y="1.5" width="22" height="22" rx="2" fill="#6e9fd6" stroke="#2d5f9a" stroke-width="1"/><path d="M4 4 L10 20 L21 4.5" fill="none" stroke="#fff" stroke-width="1.3"/><circle cx="4" cy="4" r="1.6" fill="#fff" stroke="#2d5f9a" stroke-width=".7"/><circle cx="10" cy="20" r="1.6" fill="#fff" stroke="#2d5f9a" stroke-width=".7"/><circle cx="21" cy="4.5" r="1.6" fill="#fff" stroke="#2d5f9a" stroke-width=".7"/><rect x="15.5" y="15" width="10" height="10" rx="1.6" fill="#cfa616" stroke="#b38f0a" stroke-width=".8"/><path d="M20.5 16.8 V23.2 M17.7 18.3 L23.3 21.7 M17.7 21.7 L23.3 18.3" stroke="#fff" stroke-width="1.3" stroke-linecap="round"/><circle cx="20.5" cy="20" r="1" fill="#cfa616"/></svg>
<div class="t" style="left:45px;top:217.5px;">Layers</div>
<svg style="left:364px;top:219px" width="12" height="12" viewBox="0 0 12 12" ><rect x=".5" y=".5" width="11" height="11" rx="2" fill="#f4f4f4" stroke="#6a6a6a" stroke-width="1"/><rect x="4.5" y="2.5" width="5" height="5" fill="none" stroke="#6a6a6a" stroke-width="1"/><rect x="2.5" y="4.5" width="5" height="5" fill="#f4f4f4" stroke="#6a6a6a" stroke-width="1"/></svg>
<svg style="left:377.5px;top:219px" width="12" height="12" viewBox="0 0 12 12" ><rect x=".5" y=".5" width="11" height="11" rx="2" fill="#f4f4f4" stroke="#4a4a4a" stroke-width="1"/><path d="M3 3 L9 9 M9 3 L3 9" stroke="#333" stroke-width="1.8"/></svg>
<div class="pressed" style="left:45px;top:239px;width:24px;height:23px;"></div>
<svg style="left:48px;top:241px" width="19" height="19" viewBox="0 0 19 19" ><path d="M2 9.5 L8 4 L15.5 7.5 L9 14 Z" fill="#f0d040"/><path d="M8 4 L15.5 7.5 L12.5 10.5 L5.5 6.3 Z" fill="#e8d44a"/><path d="M2 9.5 L5 6.8 L9.5 10 L6.5 13 Z" fill="#5b8fd0"/><path d="M2 9.5 L9 14 L8 16 L2.5 12.5 Z" fill="#d94b5b"/><path d="M6.5 13 L9.5 10 L12 12 L9 14.5 Z" fill="#d94b5b"/><path d="M8 9.5 L12 7 L15.5 11.5 L11.5 14.5 Z" fill="#c9a06a" stroke="#7a6a4a" stroke-width=".5"/><path d="M13 8.5 L18.5 2.5" stroke="#d9953a" stroke-width="2.2" stroke-linecap="round"/></svg>
<svg style="left:73px;top:241px" width="18" height="19" viewBox="0 0 18 19" ><rect x="2.5" y="5.5" width="8" height="10" fill="#f2f2f2" stroke="#6a6a6a" stroke-width="1"/><rect x="5.5" y="2.5" width="8" height="12" fill="#f8f8f8" stroke="#6a6a6a" stroke-width="1"/><path d="M9.5 1 V6" stroke="#6a6a6a" stroke-width="1"/><rect x="10" y="11.5" width="6.5" height="6.5" rx="1.2" fill="#58a558"/><path d="M13.2 12.8 V16.8 M11.2 14.8 H15.2" stroke="#fff" stroke-width="1.3"/></svg>
<svg style="left:97px;top:242px" width="20" height="18" viewBox="0 0 20 18" ><path d="M1.5 8 Q9 0 17 8 Q9 15.5 1.5 8 Z" fill="#f6f6f6" stroke="#7a7a7a" stroke-width="1.1"/><circle cx="9.3" cy="7.8" r="3.6" fill="#5b8fd0" stroke="#2d5f9a" stroke-width=".6"/><circle cx="9.3" cy="7.8" r="1.5" fill="#1d2f4c"/><path d="M13 15 h5 l-2.5 2.6 z" fill="#3a3a3a"/></svg>
<svg style="left:123px;top:241px" width="17" height="19" viewBox="0 0 17 19" ><path d="M1 2.5 H16 L10.3 9.5 V17.5 L6.7 15 V9.5 Z" fill="#5b8fd0" stroke="#2d5f9a" stroke-width=".9"/><path d="M1 2.5 H16" stroke="#f3c418" stroke-width="2.2"/></svg>
<svg style="left:148px;top:241px" width="18" height="19" viewBox="0 0 18 19" ><text x="0.5" y="12" font-size="16" fill="#cfcfcf" font-family="'DejaVu Sans','Liberation Sans',sans-serif">ε</text><path d="M8.5 11 h7 l-2.6 3 v4 l-1.8 -1 v-3 z" fill="#e9e9e9" stroke="#dadada" stroke-width=".8"/></svg>
<div class="arrd" style="left:171px;top:248.5px"></div>
<svg style="left:186px;top:241px" width="18" height="19" viewBox="0 0 18 19" ><path d="M2.5 2.5 V16.5 M2.5 5.5 H6 M2.5 10 H6 M2.5 14.5 H6" stroke="#7a7a7a" stroke-width=".9" stroke-dasharray="1.2 1"/><rect x="4.6" y="4" width="3" height="3" fill="#f3a21a"/><rect x="4.6" y="8.5" width="3" height="3" fill="#f3a21a"/><rect x="4.6" y="13" width="3" height="3" fill="#f3a21a"/><path d="M11 1.5 H14 V10.5 H16.8 L12.5 16.5 L8.2 10.5 H11 Z" fill="#5b8fd0" stroke="#2d4f7a" stroke-width=".8"/></svg>
<svg style="left:211px;top:241px" width="18" height="19" viewBox="0 0 18 19" ><path d="M2.5 2.5 V16.5 M2.5 5.5 H6 M2.5 10 H6 M2.5 14.5 H6" stroke="#7a7a7a" stroke-width=".9" stroke-dasharray="1.2 1"/><rect x="4.6" y="8.5" width="3" height="3" fill="#f3a21a"/><rect x="4.6" y="13" width="3" height="3" fill="#f3a21a"/><path d="M11 16.5 H14 V7.5 H16.8 L12.5 1.5 L8.2 7.5 H11 Z" fill="#5b8fd0" stroke="#2d4f7a" stroke-width=".8"/></svg>
<svg style="left:236px;top:242px" width="17" height="17" viewBox="0 0 17 17" ><rect x="1.5" y="1.5" width="11" height="11" rx="1" fill="#fcfcfc" stroke="#5a5a5a" stroke-width="1.1"/><rect x="9" y="10" width="6.5" height="5" rx="1.2" fill="#e8303a"/><path d="M10.5 12.5 H14" stroke="#fff" stroke-width="1.2"/></svg>
<div class="a" style="left:41px;top:266px;width:351px;height:728px;background:#fff;border:1px solid #b9b9b9"></div>
<div class="a" style="left:42px;top:305px;width:345px;height:19px;background:#308cc6"></div>
<div class="a" style="left:387px;top:305px;width:2px;height:19px;background:#308cc6"></div>
<div class="chk" style="left:65px;top:269px;width:14px;height:14px"></div>
<svg style="left:86px;top:269px" width="15" height="15" viewBox="0 0 15 15" ><circle cx="7.5" cy="7.5" r="6.3" fill="#3fa33f" stroke="#2f8a33" stroke-width="0.6"/></svg>
<div class="t" style="left:107px;top:268.5px;font-weight:bold;font-style:italic;color:#7f7f7f">elev_sample</div>
<svg style="left:49px;top:291px" width="6" height="9" viewBox="0 0 6 9" ><path d="M0.5 0.5 L5.5 4.5 L0.5 8.5 Z" fill="#2a2a2a"/></svg>
<div class="chk" style="left:65px;top:288px;width:14px;height:14px"></div>
<svg style="left:85px;top:287px" width="17" height="17" viewBox="0 0 17 17" ><path d="M1.5 3 L6 14.5 L11.5 3.5 Q13 1.5 15.5 2.5" fill="none" stroke="#555" stroke-width="1"/><circle cx="1.5" cy="3" r="1.1" fill="#fff" stroke="#555" stroke-width=".7"/><circle cx="6" cy="14.5" r="1.1" fill="#fff" stroke="#555" stroke-width=".7"/><circle cx="15.3" cy="2.6" r="1.1" fill="#fff" stroke="#555" stroke-width=".7"/></svg>
<div class="t" style="left:107px;top:287.5px;font-weight:bold;font-style:italic;color:#7f7f7f">elev_sample_elev</div>
<div class="a" style="left:369px;top:287px;width:17px;height:17px;background:#e4e4e4;border-radius:2px"></div>
<svg style="left:371px;top:289px" width="14" height="13" viewBox="0 0 14 13" ><rect x="1.5" y="3" width="11" height="7" rx="1.5" fill="none" stroke="#6d6d6d" stroke-width="1.1"/><path d="M4 1v2M7 1v2M10 1v2M4 10v2M7 10v2M10 10v2" stroke="#6d6d6d" stroke-width="1.1"/></svg>
<svg style="left:49px;top:310px" width="6" height="9" viewBox="0 0 6 9" ><path d="M0.5 0.5 L5.5 4.5 L0.5 8.5 Z" fill="#2a2a2a"/></svg>
<div class="chk" style="left:65px;top:307px;width:14px;height:14px"><svg width="14" height="14" viewBox="0 0 15 15" style="left:-1px;top:-1px"><path d="M3.6 7.4 L6.3 11 L11.4 3.6" fill="none" stroke="#111" stroke-width="1.9"/></svg></div>
<svg style="left:87px;top:308px" width="13" height="13" viewBox="0 0 13 13" ><rect x="0" y="0" width="4.34" height="4.34" fill="#1d3c5e"/><rect x="4.33" y="0" width="4.34" height="4.34" fill="#9fc1e0"/><rect x="8.66" y="0" width="4.34" height="4.34" fill="#2b5a8a"/><rect x="0" y="4.33" width="4.34" height="4.34" fill="#7aa6d0"/><rect x="4.33" y="4.33" width="4.34" height="4.34" fill="#1d3c5e"/><rect x="8.66" y="4.33" width="4.34" height="4.34" fill="#d4e3f1"/><rect x="0" y="8.66" width="4.34" height="4.34" fill="#1d3c5e"/><rect x="4.33" y="8.66" width="4.34" height="4.34" fill="#5f8fc0"/><rect x="8.66" y="8.66" width="4.34" height="4.34" fill="#b7d0e8"/></svg>
<div class="t" style="left:107px;top:306.5px;font-weight:bold;color:#fff"><u>Rasterized</u></div>
<div class="a" style="left:369px;top:306px;width:17px;height:17px;background:#e4e4e4;border-radius:2px"></div>
<svg style="left:371px;top:308px" width="14" height="13" viewBox="0 0 14 13" ><rect x="1.5" y="3" width="11" height="7" rx="1.5" fill="none" stroke="#6d6d6d" stroke-width="1.1"/><path d="M4 1v2M7 1v2M10 1v2M4 10v2M7 10v2M10 10v2" stroke="#6d6d6d" stroke-width="1.1"/></svg>
<svg style="left:49px;top:329px" width="6" height="9" viewBox="0 0 6 9" ><path d="M0.5 0.5 L5.5 4.5 L0.5 8.5 Z" fill="#2a2a2a"/></svg>
<div class="chk" style="left:65px;top:326px;width:14px;height:14px"><svg width="14" height="14" viewBox="0 0 15 15" style="left:-1px;top:-1px"><path d="M3.6 7.4 L6.3 11 L11.4 3.6" fill="none" stroke="#111" stroke-width="1.9"/></svg></div>
<svg style="left:85px;top:326px" width="17" height="15" viewBox="0 0 17 15" ><path d="M2.5 3 Q8 0.5 10.5 2 Q14 0.5 15.5 3 Q16.5 8 14.5 9 Q11 6.5 8 8.5 Q5 11.5 2 10.5 Q0.5 7 2.5 3 Z" fill="#e6e6e6" stroke="#6e6e6e" stroke-width="1"/></svg>
<div class="t" style="left:107px;top:325.5px;font-weight:bold">elev_sample_elev</div>
<div class="a" style="left:369px;top:325px;width:17px;height:17px;background:#e4e4e4;border-radius:2px"></div>
<svg style="left:371px;top:327px" width="14" height="13" viewBox="0 0 14 13" ><rect x="1.5" y="3" width="11" height="7" rx="1.5" fill="none" stroke="#6d6d6d" stroke-width="1.1"/><path d="M4 1v2M7 1v2M10 1v2M4 10v2M7 10v2M10 10v2" stroke="#6d6d6d" stroke-width="1.1"/></svg>
<svg style="left:47px;top:350px" width="9" height="6" viewBox="0 0 9 6" ><path d="M0.5 0.5 L8.5 0.5 L4.5 5.5 Z" fill="#2a2a2a"/></svg>
<div class="chk" style="left:65px;top:345px;width:14px;height:14px"></div>
<svg style="left:87px;top:346px" width="13" height="13" viewBox="0 0 13 13" ><rect x="0" y="0" width="4.34" height="4.34" fill="#1d3c5e"/><rect x="4.33" y="0" width="4.34" height="4.34" fill="#9fc1e0"/><rect x="8.66" y="0" width="4.34" height="4.34" fill="#2b5a8a"/><rect x="0" y="4.33" width="4.34" height="4.34" fill="#7aa6d0"/><rect x="4.33" y="4.33" width="4.34" height="4.34" fill="#1d3c5e"/><rect x="8.66" y="4.33" width="4.34" height="4.34" fill="#d4e3f1"/><rect x="0" y="8.66" width="4.34" height="4.34" fill="#1d3c5e"/><rect x="4.33" y="8.66" width="4.34" height="4.34" fill="#5f8fc0"/><rect x="8.66" y="8.66" width="4.34" height="4.34" fill="#b7d0e8"/></svg>
<div class="t" style="left:107px;top:344.5px;font-weight:bold;font-style:italic;color:#7f7f7f">Interpolated</div>
<div class="a" style="left:369px;top:344px;width:17px;height:17px;background:#e4e4e4;border-radius:2px"></div>
<svg style="left:371px;top:346px" width="14" height="13" viewBox="0 0 14 13" ><rect x="1.5" y="3" width="11" height="7" rx="1.5" fill="none" stroke="#6d6d6d" stroke-width="1.1"/><path d="M4 1v2M7 1v2M10 1v2M4 10v2M7 10v2M10 10v2" stroke="#6d6d6d" stroke-width="1.1"/></svg>
<div class="a" style="left:85px;top:363px;width:16px;height:16px;background:#000"></div>
<div class="t" style="left:107px;top:363.5px;">4.6838</div>
<div class="t" style="left:107px;top:382.5px;">1081.69</div>
<div class="chk" style="left:65px;top:402px;width:14px;height:14px"><svg width="14" height="14" viewBox="0 0 15 15" style="left:-1px;top:-1px"><path d="M3.6 7.4 L6.3 11 L11.4 3.6" fill="none" stroke="#111" stroke-width="1.9"/></svg></div>
<div class="a" style="left:85px;top:401px;width:16px;height:16px;background:#a6cee3"></div>
<div class="t" style="left:107px;top:401.5px;font-weight:bold">PHL_municities_Albay</div>
<div class="a" style="left:388px;top:267px;width:1px;height:19px;background:#d8d8d8"></div>
<div class="a" style="left:388px;top:400px;width:1px;height:19px;background:#d8d8d8"></div>
<div class="a" style="left:41px;top:994px;width:351px;height:1px;background:#b9b9b9"></div>
<div class="a" style="left:109px;top:996px;width:77px;height:24px;background:#dadada;border:1px solid #c2c2c2;border-top:none;border-radius:0 0 3px 3px"></div>
<div class="a" style="left:42px;top:994px;width:67px;height:28px;background:#f2f2f2;border:1px solid #b9b9b9;border-top:none;border-radius:0 0 3px 3px"></div>
<div class="t" style="left:53px;top:1001px;">Layers</div>
<div class="t" style="left:120px;top:1000px;">Browser</div>
<div class="a" style="left:398px;top:216px;width:1065px;height:807px;background:#fff;border:1px solid #ababab"></div>
<div class="a" style="left:399px;top:217px;width:1063px;height:805px;overflow:hidden"><svg width="1063" height="805" viewBox="0 0 1063 805" style="position:absolute;left:0;top:0" shape-rendering="crispEdges">
<defs><clipPath id="hullclip"><polygon fill="#000" points="368.5,110.0 345.0,143.0 46.5,390.5 63.0,552.0 57.6,622.7 241.0,683.0 601.5,636.7 713.5,604.3 1011.7,488.2 1004.0,444.0 954.0,426.0 888.0,391.3 684.0,285.0 501.0,189.3 441.0,156.7 421.0,144.5"/></clipPath></defs>
<polygon fill="#a6cee3" points="368.0,112.0 373.5,108.5 346.0,111.0 323.5,114.0 314.8,120.5 311.0,130.5 313.5,147.0 321.0,163.0 346.0,145.0"/>
<polygon fill="#a6cee3" points="439.0,156.0 452.0,155.0 456.0,160.5 463.0,170.0 451.0,168.0"/>
<polygon fill="#a6cee3" points="872.0,381.5 894.0,384.5 901.0,393.0 908.0,398.0 891.0,395.0"/>
<polygon fill="#a6cee3" points="954.0,425.0 973.0,428.0 989.0,433.5 1004.0,442.0 1013.0,443.0 1021.0,448.0 1029.0,458.0 1034.0,466.0 1037.5,480.0 1033.0,489.0 1026.0,493.5 1019.0,491.0 1011.0,489.5 1001.0,445.0"/>
<polygon fill="#a6cee3" points="26.0,390.5 34.0,383.5 51.0,376.0 63.0,369.0 89.0,353.0 91.0,358.0 47.0,391.0 49.0,417.0 47.0,403.0 34.0,399.5"/>
<polygon fill="#a6cee3" points="59.4,504.8 38.9,520.1 42.8,536.8 38.9,563.6 45.3,577.7 46.6,598.2 40.2,611.0 31.2,617.4 32.5,622.5 37.6,621.2 46.5,620.9 54.5,632.2 52.2,639.0 60.1,652.7 67.0,664.0 74.9,675.5 80.6,670.9 92.0,668.6 107.9,661.8 126.1,652.7 127.3,645.0 101.0,628.0 71.0,583.0"/>
<polygon fill="#a6cee3" points="227.7,676.0 244.3,693.0 252.7,679.0 241.0,673.0"/>
<polygon fill="#a6cee3" points="401.0,661.0 404.0,669.0 434.0,664.7 437.7,656.0 421.0,653.0"/>
<polygon fill="#a6cee3" points="494.3,649.0 517.7,656.3 527.7,679.7 547.7,683.0 554.3,695.7 578.5,674.9 586.0,666.8 631.0,645.5 653.5,635.5 667.2,634.9 681.0,638.0 692.2,638.6 702.2,634.2 708.5,624.2 711.6,613.0 713.5,601.0 601.0,633.0"/>
<g clip-path="url(#hullclip)">
<polygon fill="#5aa4b2" points="368.5,110.0 345.0,143.0 46.5,390.5 63.0,552.0 57.6,622.7 241.0,683.0 601.5,636.7 713.5,604.3 1011.7,488.2 1004.0,444.0 954.0,426.0 888.0,391.3 684.0,285.0 501.0,189.3 441.0,156.7 421.0,144.5"/>
<polygon fill="#2b83ba" points="368.5,103.0 501.0,178.0 684.0,275.0 891.0,383.0 887.7,391.3 896.0,443.0 876.0,440.3 811.0,516.3 927.7,508.7 719.3,564.7 701.0,548.0 772.7,398.0 732.7,392.3 681.7,398.0 681.0,355.7 672.7,358.0 676.0,386.3 672.7,401.3 604.3,407.0 587.7,393.0 567.7,376.3 537.7,356.3 521.0,339.7 498.3,320.3 492.7,311.3 461.0,306.3 444.3,258.0 453.0,251.3 454.1,211.5 438.5,194.9 421.0,179.2 402.2,166.8 391.0,158.0 381.6,148.6 377.9,139.2 374.1,131.8 371.0,121.1"/>
<polygon fill="#2b83ba" points="889.3,393.7 927.7,448.0 957.7,432.3 1002.7,444.0 954.3,426.3"/>
<polygon fill="#2b83ba" points="551.0,416.3 572.7,414.7 594.3,422.3 592.7,431.3 642.7,563.0 641.0,568.0 567.7,559.0 619.3,609.7 620.3,617.0 601.0,628.0 556.0,628.0 541.0,613.0 527.0,551.3 507.7,544.7 479.3,529.0 478.3,493.0 482.7,486.3 502.7,479.7 529.3,456.3 532.7,438.0"/>
<polygon fill="#2b83ba" points="209.3,289.7 269.3,281.3 272.7,285.3 222.7,331.3 241.7,360.3 284.3,365.7 303.7,379.7 359.3,387.0 356.3,422.3 314.3,439.7 294.3,453.7 217.7,493.7 269.3,548.0 257.7,572.3 276.0,572.3 281.0,578.0 280.3,586.3 327.7,641.3 347.7,591.3 357.7,588.0 372.7,574.7 384.3,586.3 404.3,581.3 413.3,626.3 411.7,579.7 446.0,577.3 457.7,586.3 482.7,548.0 509.3,563.0 511.0,576.3 530.3,621.3 514.3,641.3 434.3,655.7 401.0,661.0 241.0,684.0 56.0,622.5 58.0,586.0 67.7,611.3 97.7,629.7 167.7,646.3 204.3,661.3 167.7,616.3 182.7,604.7 198.3,573.0 204.3,611.3 209.3,621.3 234.3,621.3 241.0,639.7 249.3,656.3 254.3,668.0 326.0,646.3 291.0,636.3 282.7,631.3 267.7,603.0 254.3,578.0 241.0,569.7 201.0,494.7 192.7,478.0 171.0,423.0 129.3,425.7 101.0,396.3 109.3,374.7 136.0,346.3"/>
<polygon fill="#88c4aa" points="356.0,125.5 369.8,131.8 372.9,141.8 376.6,149.2 382.9,159.2 392.2,166.8 414.8,183.0 422.2,189.2 437.2,200.5 448.5,214.0 447.2,243.0 438.5,249.2 427.9,273.0 409.5,294.2 411.0,309.2 431.0,311.8 488.5,331.8 493.5,334.2 516.0,344.2 526.0,358.0 528.5,369.0 576.6,407.4 549.8,408.0 539.8,413.0 531.0,423.0 528.5,433.0 508.5,448.0 507.2,455.5 492.2,469.2 461.0,473.0 436.0,498.0 379.8,474.2 384.0,440.5 378.5,411.0 381.0,393.5 352.2,369.2 346.0,364.2 322.2,364.2 314.3,356.3 294.3,343.0 274.0,334.0 308.5,313.0 313.5,298.0 311.0,288.5 297.2,284.0 288.5,274.5 291.6,241.1 247.2,248.0 104.8,356.8 71.0,383.0 72.7,384.7 71.0,394.7 107.7,419.7 131.0,446.3 134.3,473.0 151.0,516.3 144.3,544.7 102.7,576.3 124.3,613.0 86.0,583.0 81.0,566.3 81.0,529.7 67.7,513.0 56.5,486.3 49.0,473.0 41.0,390.0 345.0,141.0"/>
<polygon fill="#88c4aa" points="329.3,486.3 359.3,494.7 364.3,519.7 361.0,538.0 341.0,548.0 291.0,553.0 314.3,509.7"/>
<polygon fill="#88c4aa" points="619.8,584.9 644.1,590.5 666.0,589.2 694.8,571.8 704.8,578.0 702.9,583.6 791.0,558.0 907.0,528.0 921.0,528.0 713.5,609.0 601.5,640.0 576.0,645.0 576.0,640.0 602.0,634.5 636.0,618.0 629.1,604.9 632.9,599.9"/>
<polygon fill="#b3e0a6" points="350.4,134.2 368.5,142.4 372.2,146.8 377.2,156.8 384.1,168.0 395.4,173.0 413.5,185.5 417.2,193.0 442.2,218.0 441.0,228.0 439.1,243.0 432.2,260.5 422.2,273.0 396.0,288.0 401.0,323.0 431.0,326.8 471.0,343.0 491.0,349.2 513.5,363.0 522.2,383.0 542.2,400.8 528.5,402.4 521.0,409.2 516.6,420.5 506.0,431.8 488.5,451.0 478.5,459.2 451.0,458.0 434.8,473.0 401.0,459.2 402.2,438.0 401.0,418.0 396.0,391.8 394.8,385.5 384.8,374.2 373.5,370.5 347.2,349.2 338.5,349.2 314.8,325.5 319.8,308.0 332.2,321.8 348.5,296.4 326.0,300.0 321.0,295.5 317.2,279.2 305.4,271.8 310.4,225.5 312.2,201.5 286.0,205.0 90.5,356.8 53.0,388.0 45.5,390.0 345.0,143.0"/>
<polygon fill="#b3e0a6" points="69.3,412.3 101.0,438.0 107.7,474.7 84.3,459.7"/>
<polygon fill="#b3e0a6" points="339.3,508.0 349.3,511.3 351.0,526.3 324.3,531.3"/>
<polygon fill="#b3e0a6" points="641.0,597.0 659.0,598.0 668.5,597.4 684.0,589.0 688.5,591.0 686.0,601.8 801.0,568.3 907.0,528.5 921.0,528.0 713.5,609.0 636.0,633.0 636.0,629.3 651.6,619.2"/>
<polygon fill="#d1ecb0" points="344.8,143.0 367.9,151.8 376.0,159.2 386.0,173.0 406.0,184.2 411.0,196.8 437.9,223.0 434.8,243.0 428.5,259.2 416.0,271.8 389.8,283.0 346.0,289.9 327.2,281.8 324.8,270.5 322.9,260.5 329.1,198.0 331.6,173.0 332.2,161.8 322.5,162.0"/>
<polygon fill="#d1ecb0" points="396.6,341.1 434.8,343.6 453.5,349.2 474.8,349.2 491.0,356.8 502.2,361.8 507.2,374.2 514.8,389.2 515.4,398.0 507.2,409.2 504.8,418.0 497.2,429.2 487.2,445.5 478.5,454.2 467.2,449.2 443.5,442.4 434.8,447.4 422.2,441.8 422.2,426.8 412.9,418.0 412.2,400.5 396.0,350.5 401.0,345.5"/>
<polygon fill="#d1ecb0" points="354.1,348.0 391.6,340.5 384.8,374.9"/>
<polygon fill="#d1ecb0" points="670.0,604.0 673.0,604.0 669.5,621.0 667.5,621.0"/>
<polygon fill="#f0f9ba" points="351.0,157.4 374.1,166.8 379.8,170.5 387.2,179.2 402.2,190.5 407.2,203.0 431.6,225.5 428.5,244.2 422.9,253.0 413.5,263.0 384.8,278.0 363.5,281.8 341.0,268.0 333.5,266.8 342.2,248.0 347.2,185.5 348.5,173.0"/>
<polygon fill="#f0f9ba" points="443.5,355.5 473.5,356.1 484.8,361.8 501.0,370.5 503.5,380.5 507.9,395.5 506.0,404.2 499.8,418.0 487.2,439.2 474.8,449.9 459.8,443.0 441.0,434.2 428.5,425.5 421.0,418.0 422.9,383.0 431.0,373.0"/>
<polygon fill="#f0f9ba" points="372.0,355.5 375.5,355.0 375.0,358.0 373.0,358.5"/>
<polygon fill="#f0f9ba" points="317.5,320.5 319.0,321.0 318.5,323.5"/>
<polygon fill="#fff0ae" points="366.6,174.2 384.8,182.4 397.2,196.1 401.0,209.2 418.5,220.5 426.0,228.0 423.5,239.2 418.5,249.2 406.0,260.5 383.5,271.8 353.5,264.9 343.5,262.4 361.0,228.0 366.0,185.5"/>
<polygon fill="#fff0ae" points="448.5,359.2 469.8,361.8 496.0,373.0 497.9,383.0 502.2,394.2 498.5,408.0 486.0,433.0 472.2,444.2 441.0,429.2 426.0,416.8 427.2,385.5 436.0,375.5"/>
<polygon fill="#fed38c" points="382.9,191.8 391.0,198.0 394.8,209.2 398.5,216.8 412.2,225.5 419.8,231.8 418.5,241.8 408.5,253.0 379.8,267.4 362.2,263.6 352.9,261.1 368.5,231.8 381.0,208.0"/>
<polygon fill="#fed38c" points="448.5,362.4 468.5,364.9 492.9,375.5 494.1,384.2 497.2,393.0 493.5,405.5 481.0,430.5 469.1,439.9 439.8,425.5 432.2,418.0 433.5,383.0 441.0,373.0"/>
<polygon fill="#fdb56a" points="383.5,221.1 392.2,218.2 393.5,222.4 412.9,234.9 413.5,240.5 406.0,248.0 377.2,262.4 362.9,259.9 376.0,233.0"/>
<polygon fill="#fdb56a" points="449.8,366.1 466.0,367.4 490.4,378.0 491.0,385.5 492.9,391.8 488.5,404.2 477.2,426.8 467.2,436.8 442.2,423.0 437.2,414.2 437.9,383.0 444.8,373.0"/>
<polygon fill="#f3854e" points="372.9,257.4 404.1,237.8 407.9,240.5 406.0,243.0 374.1,258.3"/>
<polygon fill="#f3854e" points="452.2,369.2 464.8,370.5 486.6,379.9 487.9,389.2 478.5,408.0 464.8,430.5 461.0,430.5 446.0,420.5 441.6,413.0 441.6,383.0 448.5,373.0"/>
<polygon fill="#e54f35" points="454.1,373.0 463.5,374.2 482.9,383.0 482.2,388.0 472.2,408.0 458.5,426.1 446.0,418.0 446.6,383.0"/>
<polygon fill="#d7191c" points="454.8,376.8 461.0,376.8 474.8,383.0 466.0,400.5 456.0,420.5 452.2,419.2 451.0,383.0"/>
</g></svg></div>
<div class="h" style="left:394px;top:608px;height:20px;width:2px;background-size:3px 3px"></div>
<div class="h" style="left:1465px;top:608px;height:20px;width:2px;background-size:3px 3px"></div>
<div class="t" style="left:1473px;top:217.5px;">Layer Styling</div>
<svg style="left:1894px;top:219px" width="12" height="12" viewBox="0 0 12 12" ><rect x=".5" y=".5" width="11" height="11" rx="2" fill="#f4f4f4" stroke="#6a6a6a" stroke-width="1"/><rect x="4.5" y="2.5" width="5" height="5" fill="none" stroke="#6a6a6a" stroke-width="1"/><rect x="2.5" y="4.5" width="5" height="5" fill="#f4f4f4" stroke="#6a6a6a" stroke-width="1"/></svg>
<svg style="left:1907.5px;top:219px" width="12" height="12" viewBox="0 0 12 12" ><rect x=".5" y=".5" width="11" height="11" rx="2" fill="#f4f4f4" stroke="#4a4a4a" stroke-width="1"/><path d="M3 3 L9 9 M9 3 L3 9" stroke="#333" stroke-width="1.8"/></svg>
<div class="cb" style="left:1472px;top:238px;width:446px;height:25px;"></div>
<svg style="left:1480px;top:244px" width="12" height="12" viewBox="0 0 13 13" ><rect x="0" y="0" width="4.34" height="4.34" fill="#1d3c5e"/><rect x="4.33" y="0" width="4.34" height="4.34" fill="#9fc1e0"/><rect x="8.66" y="0" width="4.34" height="4.34" fill="#2b5a8a"/><rect x="0" y="4.33" width="4.34" height="4.34" fill="#7aa6d0"/><rect x="4.33" y="4.33" width="4.34" height="4.34" fill="#1d3c5e"/><rect x="8.66" y="4.33" width="4.34" height="4.34" fill="#d4e3f1"/><rect x="0" y="8.66" width="4.34" height="4.34" fill="#1d3c5e"/><rect x="4.33" y="8.66" width="4.34" height="4.34" fill="#5f8fc0"/><rect x="8.66" y="8.66" width="4.34" height="4.34" fill="#b7d0e8"/></svg>
<div class="t" style="left:1497px;top:243px;">Rasterized</div>
<div class="arr" style="left:1902px;top:249px"></div>
<div class="a" style="left:1472px;top:301px;width:38px;height:690px;background:#5e5e5e"></div>
<svg style="left:1477px;top:274px" width="24" height="22" viewBox="0 0 24 22" ><g transform="scale(1.22) translate(.5 .3)"><path d="M2 9.5 L8 4 L15.5 7.5 L9 14 Z" fill="#8fc46a"/><path d="M8 4 L15.5 7.5 L12.5 10.5 L5.5 6.3 Z" fill="#e8d44a"/><path d="M2 9.5 L5 6.8 L9.5 10 L6.5 13 Z" fill="#5b8fd0"/><path d="M2 9.5 L9 14 L8 16 L2.5 12.5 Z" fill="#d94b5b"/><path d="M6.5 13 L9.5 10 L12 12 L9 14.5 Z" fill="#d94b5b"/><path d="M8 9.5 L12 7 L15.5 11.5 L11.5 14.5 Z" fill="#9a9a78" stroke="#7a6a4a" stroke-width=".5"/><path d="M13 8.5 L18.5 2.5" stroke="#b59a5a" stroke-width="2.2" stroke-linecap="round"/></g></svg>
<svg style="left:1476px;top:307px" width="22" height="22" viewBox="0 0 22 22" ><defs><linearGradient id="tg" x1="0" x2="1"><stop offset="0" stop-color="#5f7aa6"/><stop offset="1" stop-color="#dfe5ee"/></linearGradient></defs><rect x=".5" y="1.5" width="21" height="14" fill="url(#tg)" stroke="#dfe3ea" stroke-width=".8"/><path d="M4 6 Q6 4 9 5 L10 7 L8 9 L6 8 Z M11 5 Q15 3.5 19 5.5 L18 9 L14 10 L12 8 Z M8 10 L10 10.5 L9.5 13 L8 12 Z" fill="#eef1f6" fill-opacity=".8"/><rect x=".5" y="16.5" width="21" height="2" fill="#2d3d5a"/><rect x="3" y="16" width="2" height="3" fill="#4f8fd0"/><path d="M.5 20.5 H21.5" stroke="#d0d0d0" stroke-width="1"/></svg>
<svg style="left:1476px;top:340px" width="22" height="16" viewBox="0 0 22 16" ><path d="M.8 1 L21 2 V14.5 L.8 14.5 Z" fill="#e6e6e6" stroke="#c9c9c9" stroke-width=".8"/><path d="M3 2.5 V12.5 H19" fill="none" stroke="#bdbdbd" stroke-width=".7"/><path d="M4 8 L6.5 5.5 L9.5 9.5 L12 6.5 L15 10 L17 7.5 L19.5 9" fill="none" stroke="#3d5f8e" stroke-width="1"/></svg>
<svg style="left:1476px;top:369px" width="24" height="24" viewBox="0 0 24 24" ><rect x="6.5" y="1" width="9" height="7.5" fill="#e85a5a" stroke="#c23c3c" stroke-width=".6"/><path d="M8.5 6 V14 M13.5 6 V14 M4.5 15 V10.5 H17.5 V15" fill="none" stroke="#e8a23a" stroke-width="2.4"/><rect x=".8" y="14.5" width="8.5" height="7.5" fill="#f7dc4a" stroke="#c9a01a" stroke-width=".6"/><rect x="13" y="14.5" width="8.5" height="7.5" fill="#7fb4ee" stroke="#4f80c0" stroke-width=".6"/></svg>
<svg style="left:1477px;top:402px" width="22" height="22" viewBox="0 0 22 22" ><path d="M2 9 Q1.5 3.5 8 4.5 V1.5 L13.5 6.5 L8 11 V8 Q5 7.5 5 11 Q3 11 2 9 Z" fill="#6cbf7c" stroke="#4a9a5a" stroke-width=".5"/><path d="M19.5 15 Q20 20 14 19.5 Q16.5 18 16 16 Q15.5 14.5 13 15 V18 L7.5 13 L13 8.5 V11.5 Q19 11 19.5 15 Z" fill="#f08a3c" stroke="#c9641a" stroke-width=".5"/></svg>
<div class="a" style="left:1904px;top:268px;width:15px;height:692px;background:#dedede;border-left:1px solid #cfcfcf"></div>
<div class="a" style="left:1905px;top:268px;width:14px;height:14px;background:#f3f3f3;border:1px solid #d0d0d0"></div>
<div class="up" style="left:1908px;top:273px;border-left-width:3.5px;border-right-width:3.5px;border-bottom-width:4px"></div>
<div class="a" style="left:1905px;top:282px;width:14px;height:445px;background:linear-gradient(90deg,#f9f9f9,#ececec);border:1px solid #c6c6c6"></div>
<div class="a" style="left:1905px;top:945px;width:14px;height:15px;background:#f3f3f3;border:1px solid #d0d0d0"></div>
<div class="arr" style="left:1908px;top:951px"></div>
<div class="cb" style="left:1522px;top:278px;width:373px;height:25px;"></div>
<svg style="left:1530px;top:284px" width="12" height="13" viewBox="0 0 12 13" ><defs><linearGradient id="pc" x1="0" x2="1"><stop offset="0" stop-color="#d7191c"/><stop offset=".5" stop-color="#ffffbf"/><stop offset="1" stop-color="#2b83ba"/></linearGradient></defs><rect x=".5" y=".5" width="11" height="12" fill="url(#pc)" stroke="#555" stroke-width="1"/></svg>
<div class="t" style="left:1547px;top:282.5px;">Singleband pseudocolor</div>
<div class="arr" style="left:1879px;top:289px"></div>
<div class="t" style="left:1525px;top:317px;">Band</div>
<div class="cb" style="left:1565px;top:312px;width:327px;height:25px;"></div>
<div class="t" style="left:1570px;top:316.5px;">Band 1 (Gray)</div>
<div class="arr" style="left:1876px;top:323px"></div>
<div class="t" style="left:1525px;top:348px;">Min</div>
<div class="in" style="left:1565px;top:343px;width:142px;height:25px;"></div>
<div class="t" style="left:1568px;top:347.5px;">100</div>
<div class="t" style="left:1713px;top:348px;">Max</div>
<div class="in" style="left:1750px;top:343px;width:142px;height:25px;"></div>
<div class="t" style="left:1753px;top:347.5px;">1200</div>
<svg style="left:1529.5px;top:378.5px" width="9" height="11" viewBox="0 0 9 11" ><path d="M0.5 0.3 L8.5 5.5 L0.5 10.7 Z" fill="#333"/></svg>
<div class="t" style="left:1547px;top:375.8px;font-weight:bold">Min / Max Value Settings</div>
<div class="t" style="left:1528px;top:411px;">Interpolation</div>
<div class="cb" style="left:1652px;top:406px;width:237px;height:25px;"></div>
<div class="t" style="left:1657px;top:410.5px;">Linear</div>
<div class="arr" style="left:1873px;top:417px"></div>
<div class="t" style="left:1528px;top:444px;">Color ramp</div>
<div class="cb" style="left:1652px;top:437px;width:225px;height:28px;"></div>
<div class="a" style="left:1657px;top:443px;width:215px;height:16px;background:linear-gradient(90deg,#2b83ba 0%,#abdda4 25%,#ffffbf 50%,#fdae61 75%,#d7191c 100%)"></div>
<div class="cb" style="left:1878px;top:437px;width:11px;height:28px;"></div>
<div class="arr" style="left:1880px;top:449px;border-left-width:3.5px;border-right-width:3.5px;border-top-width:4.5px"></div>
<div class="t" style="left:1528px;top:471.5px;line-height:15px">Label unit</div>
<div class="t" style="left:1528px;top:486.5px;line-height:15px">suffix</div>
<div class="in" style="left:1652px;top:474px;width:237px;height:25px;"></div>
<div class="a" style="left:1528px;top:509px;width:361px;height:250px;background:#fff;border:1px solid #b9b9b9"></div>
<div class="a" style="left:1529px;top:510px;width:346px;height:21px;background:linear-gradient(#fbfbfb,#ececec);border-bottom:1px solid #c4c4c4"></div>
<div class="a" style="left:1628px;top:510px;width:1px;height:20px;background:#cfcfcf"></div>
<div class="a" style="left:1687px;top:510px;width:1px;height:20px;background:#cfcfcf"></div>
<div class="t" style="left:1531px;top:513px;">Value</div>
<div class="t" style="left:1631px;top:513px;">Color</div>
<div class="t" style="left:1690px;top:513px;">Label</div>
<div class="a" style="left:1640px;top:532px;width:36px;height:36px;background:#2b83ba;border-radius:5px"></div>
<div class="t" style="left:1552px;top:543px;">100</div>
<div class="t" style="left:1691px;top:543px;color:#a2a2a2">100</div>
<div class="a" style="left:1640px;top:570px;width:36px;height:36px;background:#5ea7b1;border-radius:5px"></div>
<div class="t" style="left:1552px;top:581px;">210</div>
<div class="t" style="left:1691px;top:581px;color:#a2a2a2">210</div>
<div class="a" style="left:1640px;top:608px;width:36px;height:36px;background:#91cba9;border-radius:5px"></div>
<div class="t" style="left:1552px;top:619px;">320</div>
<div class="t" style="left:1691px;top:619px;color:#a2a2a2">320</div>
<div class="a" style="left:1640px;top:646px;width:36px;height:36px;background:#bce4aa;border-radius:5px"></div>
<div class="t" style="left:1552px;top:657px;">430</div>
<div class="t" style="left:1691px;top:657px;color:#a2a2a2">430</div>
<div class="a" style="left:1640px;top:684px;width:36px;height:36px;background:#dff2b4;border-radius:5px"></div>
<div class="t" style="left:1552px;top:695px;">540</div>
<div class="t" style="left:1691px;top:695px;color:#a2a2a2">540</div>
<div class="a" style="left:1640px;top:722px;width:36px;height:36px;background:#ffffbf;border-radius:5px"></div>
<div class="t" style="left:1552px;top:733px;">650</div>
<div class="t" style="left:1691px;top:733px;color:#a2a2a2">650</div>
<div class="a" style="left:1529px;top:758px;width:346px;height:1px;background:#b9b9b9"></div>
<div class="a" style="left:1529px;top:759px;width:346px;height:3px;background:#efefef"></div>
<div class="a" style="left:1874px;top:510px;width:14px;height:248px;background:#dfdfdf;border-left:1px solid #cfcfcf"></div>
<div class="a" style="left:1875px;top:510px;width:13px;height:13px;background:#f4f4f4;border:1px solid #d0d0d0"></div>
<div class="up" style="left:1877.5px;top:514px;border-left-width:3.5px;border-right-width:3.5px;border-bottom-width:4px"></div>
<div class="a" style="left:1875px;top:523px;width:13px;height:101px;background:linear-gradient(90deg,#f9f9f9,#ececec);border:1px solid #c6c6c6"></div>
<div class="a" style="left:1875px;top:745px;width:13px;height:13px;background:#f4f4f4;border:1px solid #d0d0d0"></div>
<div class="arr" style="left:1877.5px;top:750px;border-left-width:3.5px;border-right-width:3.5px;border-top-width:4px"></div>
<div class="t" style="left:1528px;top:770px;">Mode</div>
<div class="cb" style="left:1570px;top:765px;width:117px;height:25px;"></div>
<div class="t" style="left:1575px;top:769.5px;">Equal Interval</div>
<div class="arr" style="left:1672px;top:775px;border-left-width:3.5px;border-right-width:3.5px;border-top-width:4.5px"></div>
<div class="t" style="left:1781px;top:770px;">Classes</div>
<div class="in" style="left:1836px;top:766px;width:53px;height:23px;"></div>
<div class="t" style="left:1841px;top:769.5px;">11</div>
<div class="a" style="left:1873px;top:767px;width:1px;height:21px;background:#d0d0d0"></div>
<svg style="left:1877px;top:769.5px" width="8" height="16" viewBox="0 0 8 16"><path d="M0.5 5.5 L4 1.5 L7.5 5.5 Z M0.5 10.5 L4 14.5 L7.5 10.5 Z" fill="#3a3a3a"/></svg>
<div class="btn" style="left:1528px;top:797px;width:80px;height:25px;"></div>
<div class="t" style="left:1528px;top:801.5px;width:80px;text-align:center">Classify</div>
<div class="btn" style="left:1614px;top:798px;width:28px;height:24px;"></div>
<div class="btn" style="left:1648px;top:798px;width:28px;height:24px;"></div>
<div class="btn" style="left:1682px;top:798px;width:28px;height:24px;"></div>
<div class="btn" style="left:1716px;top:798px;width:28px;height:24px;"></div>
<div class="btn" style="left:1750px;top:798px;width:28px;height:24px;"></div>
<svg style="left:1620px;top:802px" width="16" height="16" viewBox="0 0 16 16" ><path d="M6 1.5 H10 V6 H14.5 V10 H10 V14.5 H6 V10 H1.5 V6 H6 Z" fill="#e6f2e6" stroke="#3d8f3d" stroke-width="1.2"/></svg>
<svg style="left:1654px;top:802px" width="16" height="16" viewBox="0 0 16 16" ><rect x="1.5" y="6" width="13" height="4" rx=".8" fill="#fbe6e6" stroke="#e8303a" stroke-width="1.2"/></svg>
<svg style="left:1687px;top:801px" width="18" height="18" viewBox="0 0 18 18" ><path d="M2 9 L8 3 V6.5 Q14 6 14.5 11 Q12 9 8 10 V13.5 Z" fill="#7dbd7d" stroke="#5a9a5a" stroke-width=".5"/><path d="M16 9.5 L11 15 V12 Q7 12.5 5.5 10.5 Q8 16 11 16 Z" fill="#8fc98f"/></svg>
<svg style="left:1721px;top:802px" width="18" height="16" viewBox="0 0 18 16" ><path d="M1.5 14 V3 Q1.5 2 2.5 2 H6.5 L8 4 H14 Q15 4 15 5 V7 H5 L1.7 14.3 Z" fill="#f3c52a" stroke="#d9a91a" stroke-width=".6"/><path d="M4.8 7 H17 L14 15 H1.5 Z" fill="#fbd94f" stroke="#d9a91a" stroke-width=".6"/></svg>
<svg style="left:1756px;top:801px" width="17" height="18" viewBox="0 0 17 18" ><rect x="1" y="1.5" width="14" height="15" rx="1.5" fill="#5b86c0" stroke="#3d62a0" stroke-width=".8"/><rect x="3.5" y="2" width="9" height="6" fill="#9a9a9a"/><rect x="4" y="10.5" width="8" height="6" fill="#e9e9e9"/><rect x="5" y="12" width="2" height="3" fill="#2f5d94"/><rect x="10.5" y="11.5" width="5.5" height="5.5" rx="1" fill="#4a9a4a"/><path d="M12 15.5 L14.5 13" stroke="#fff" stroke-width="1.1"/></svg>
<div class="chk" style="left:1528px;top:834px;width:14px;height:14px"></div>
<div class="t" style="left:1547px;top:834px;">Clip out of range values</div>
<div class="t" style="left:1525px;top:868px;font-weight:bold">Layer Rendering</div>
<div class="a" style="left:1523px;top:886px;width:372px;height:74px;background:#f4f4f4;border:1px solid #d9d9d9;border-bottom:none;border-radius:3px 3px 0 0"></div>
<div class="t" style="left:1534px;top:902px;">Blending mode</div>
<div class="cb" style="left:1665px;top:897px;width:218px;height:25px;"></div>
<div class="t" style="left:1670px;top:901.5px;">Normal</div>
<div class="arr" style="left:1867px;top:908px"></div>
<div class="t" style="left:1534px;top:933px;">Brightness</div>
<div class="a" style="left:1666px;top:938px;width:152px;height:4px;background:#d6d6d6;border:1px solid #bdbdbd;border-radius:2px"></div>
<div class="a" style="left:1666px;top:938px;width:76px;height:4px;background:#3daee9;border:1px solid #2b8fca;border-radius:2px"></div>
<div class="a" style="left:1736px;top:934px;width:12px;height:12px;background:linear-gradient(#fdfdfd,#e6e6e6);border:1px solid #a9a9a9;border-radius:3px"></div>
<div class="in" style="left:1825px;top:929px;width:58px;height:23px;"></div>
<div class="t" style="left:1830px;top:932.5px;">0</div>
<div class="a" style="left:1867px;top:930px;width:1px;height:21px;background:#d0d0d0"></div>
<svg style="left:1871px;top:932.5px" width="8" height="16" viewBox="0 0 8 16"><path d="M0.5 5.5 L4 1.5 L7.5 5.5 Z M0.5 10.5 L4 14.5 L7.5 10.5 Z" fill="#3a3a3a"/></svg>
<div class="btn" style="left:1513px;top:967px;width:24px;height:23px;"></div>
<div class="btn" style="left:1543px;top:967px;width:24px;height:23px;"></div>
<svg style="left:1518px;top:971px" width="15" height="15" viewBox="0 0 15 15" ><path d="M1 6 L6.5 1 V4 Q13.5 4 13.5 9.5 Q13.5 13 9.5 14 Q11 12 10.5 10.5 Q10 8 6.5 8 V11 Z" fill="#f08a2c" stroke="#c9641a" stroke-width=".5"/></svg>
<svg style="left:1548px;top:971px" width="15" height="15" viewBox="0 0 15 15" ><path d="M14 6 L8.5 1 V4 Q1.5 4 1.5 9.5 Q1.5 13 5.5 14 Q4 12 4.5 10.5 Q5 8 8.5 8 V11 Z" fill="#6ab36a" stroke="#4a8f4a" stroke-width=".5"/></svg>
<div class="chk" style="left:1730px;top:971px;width:14px;height:14px"><svg width="14" height="14" viewBox="0 0 15 15" style="left:-1px;top:-1px"><path d="M3.6 7.4 L6.3 11 L11.4 3.6" fill="none" stroke="#111" stroke-width="1.9"/></svg></div>
<div class="t" style="left:1749px;top:971px;">Live update</div>
<div class="btn" style="left:1838px;top:966px;width:80px;height:25px;"></div>
<svg style="left:1850px;top:971px" width="14" height="15" viewBox="0 0 14 15" ><path d="M1 8.5 L3.5 6.5 L5.5 10 Q8.5 3.5 12.5 0.8 L13.5 1.8 Q9 7 6.5 14 L4.5 14 Z" fill="#5d7d3b"/></svg>
<div class="t" style="left:1865px;top:971.5px;">Apply</div>
<div class="a" style="left:1579px;top:994px;width:342px;height:1px;background:#c6c6c6"></div>
<div class="a" style="left:1580px;top:996px;width:84px;height:24px;background:#dadada;border:1px solid #c2c2c2;border-top:none;border-radius:0 0 3px 3px"></div>
<div class="a" style="left:1664px;top:996px;width:149px;height:24px;background:#dadada;border:1px solid #c2c2c2;border-top:none;border-left:none;border-radius:0 0 3px 3px"></div>
<div class="a" style="left:1469px;top:994px;width:111px;height:28px;background:#f2f2f2;border:1px solid #b9b9b9;border-top:none;border-radius:0 0 3px 3px"></div>
<div class="t" style="left:1481px;top:1001px;">Layer Styling</div>
<div class="t" style="left:1591px;top:1000px;">Statistics</div>
<div class="t" style="left:1675.5px;top:1000px;letter-spacing:0.16px">Processing Toolbox</div>
<div class="a" style="left:1px;top:1023px;width:1921px;height:32px;background:#efefef"></div>
<div class="in" style="left:5px;top:1026px;width:270px;height:25px;"></div>
<svg style="left:13px;top:1031px" width="14" height="14" viewBox="0 0 14 14" ><circle cx="5.5" cy="5.5" r="4" fill="none" stroke="#9a9a9a" stroke-width="1.3"/><path d="M8.5 8.5 L12.5 12.5" stroke="#9a9a9a" stroke-width="1.6"/></svg>
<div class="t" style="left:34px;top:1030.5px;">rasterize</div>
<svg style="left:252px;top:1032px" width="15" height="11" viewBox="0 0 15 11" ><path d="M5 0.5 H14 Q14.5 0.5 14.5 1 V10 Q14.5 10.5 14 10.5 H5 L0.5 5.5 Z" fill="#8c8c8c"/><path d="M7 3 L12 8 M12 3 L7 8" stroke="#fff" stroke-width="1.3"/></svg>
<div class="t" style="left:283px;top:1031.5px;font-size:11px">3 legend entries removed.</div>
<div class="t" style="left:1026px;top:1031.5px;font-size:11px">Coordinate</div>
<div class="in" style="left:1090px;top:1026.5px;width:111px;height:24px;"></div>
<div class="t" style="left:1090px;top:1031.5px;font-size:11px;width:111px;text-align:center">596059,1451587</div>
<svg style="left:1204px;top:1029px" width="18" height="19" viewBox="0 0 18 19" ><path d="M3 5 Q7 1 12 3 M1.5 8 Q0.5 11 2.5 14" fill="none" stroke="#333" stroke-width="1" stroke-dasharray="2 1.2"/><ellipse cx="9" cy="9.5" rx="4" ry="5.6" fill="#f4f4f4" stroke="#222" stroke-width="1.4" transform="rotate(-28 9 9.5)"/><path d="M5 7 L11.5 4 M7.5 3.5 L9.5 8.5" stroke="#222" stroke-width="1.1"/><ellipse cx="11.5" cy="14" rx="2.6" ry="1.8" fill="#fff" stroke="#222" stroke-width="1" transform="rotate(-28 11.5 14)"/><path d="M12 2.5 L15 0.5" stroke="#333" stroke-width=".9"/></svg>
<svg style="left:1375px;top:1031px" width="13" height="15" viewBox="0 0 13 15" ><path d="M3.5 7 V4.8 A3 3 0 0 1 9.5 4.8 V7" fill="none" stroke="#6a6a6a" stroke-width="2"/><rect x="1" y="6.5" width="11" height="8" rx="1.6" fill="#666"/></svg>
<svg style="left:1789px;top:1031px" width="15" height="15" viewBox="0 0 15 15" ><circle cx="7.5" cy="7.5" r="6.3" fill="none" stroke="#6a6a6a" stroke-width="1"/><path d="M1.2 7.5 H13.8 M7.5 1.2 V13.8 M2.5 4 Q7.5 6 12.5 4 M2.5 11 Q7.5 9 12.5 11 M7.5 1.2 Q3 7.5 7.5 13.8 M7.5 1.2 Q12 7.5 7.5 13.8" fill="none" stroke="#6a6a6a" stroke-width=".8"/></svg>
<svg style="left:1897px;top:1031px" width="18" height="17" viewBox="0 0 18 17" ><path d="M8.5 1 Q16.5 1 16.5 7 Q16.5 11.5 12.5 12.6 Q13.5 15 16 15.8 Q11.5 16.3 9.6 13 Q0.8 13.2 0.8 7 Q0.8 1 8.5 1 Z" fill="#5c5c5c"/><circle cx="5" cy="7" r="1.15" fill="#fff"/><circle cx="8.6" cy="7" r="1.15" fill="#fff"/><circle cx="12.2" cy="7" r="1.15" fill="#fff"/></svg>
<div class="t" style="left:1234px;top:1031.5px;font-size:11px">Scale</div>
<div class="in" style="left:1267px;top:1026.5px;width:97px;height:24px;"></div>
<div class="t" style="left:1271px;top:1031.5px;font-size:11px">1:382285</div>
<div class="a" style="left:1343px;top:1028px;width:1px;height:21px;background:#d0d0d0"></div>
<div class="arr" style="left:1349px;top:1036px"></div>
<div class="t" style="left:1397px;top:1031.5px;font-size:11px">Magnifier</div>
<div class="in" style="left:1452px;top:1026.5px;width:98px;height:24px;"></div>
<div class="t" style="left:1457px;top:1031.5px;font-size:11px">100%</div>
<div class="a" style="left:1534px;top:1028px;width:1px;height:21px;background:#d0d0d0"></div>
<svg style="left:1537.5px;top:1030.5px" width="8" height="16" viewBox="0 0 8 16"><path d="M0.5 5.5 L4 1.5 L7.5 5.5 Z M0.5 10.5 L4 14.5 L7.5 10.5 Z" fill="#3a3a3a"/></svg>
<div class="t" style="left:1559px;top:1031.5px;font-size:11px">Rotation</div>
<div class="in" style="left:1615px;top:1026.5px;width:93px;height:24px;"></div>
<div class="t" style="left:1620px;top:1031.5px;font-size:11px">0.0 °</div>
<div class="a" style="left:1692px;top:1028px;width:1px;height:21px;background:#d0d0d0"></div>
<svg style="left:1695.5px;top:1030.5px" width="8" height="16" viewBox="0 0 8 16"><path d="M0.5 5.5 L4 1.5 L7.5 5.5 Z M0.5 10.5 L4 14.5 L7.5 10.5 Z" fill="#3a3a3a"/></svg>
<div class="chk" style="left:1715px;top:1032px;width:13px;height:13px"><svg width="13" height="13" viewBox="0 0 15 15" style="left:-1px;top:-1px"><path d="M3.6 7.4 L6.3 11 L11.4 3.6" fill="none" stroke="#111" stroke-width="1.9"/></svg></div>
<div class="t" style="left:1733px;top:1031.5px;font-size:11px">Render</div>
<div class="t" style="left:1806px;top:1031.5px;font-size:11px">EPSG:32651</div>
<div class="a" style="left:0px;top:1054px;width:1922px;height:1px;background:#a2a2a2"></div>
<div class="a" style="left:1921px;top:0px;width:1px;height:1055px;background:#a2a2a2"></div>
</div></body></html>
